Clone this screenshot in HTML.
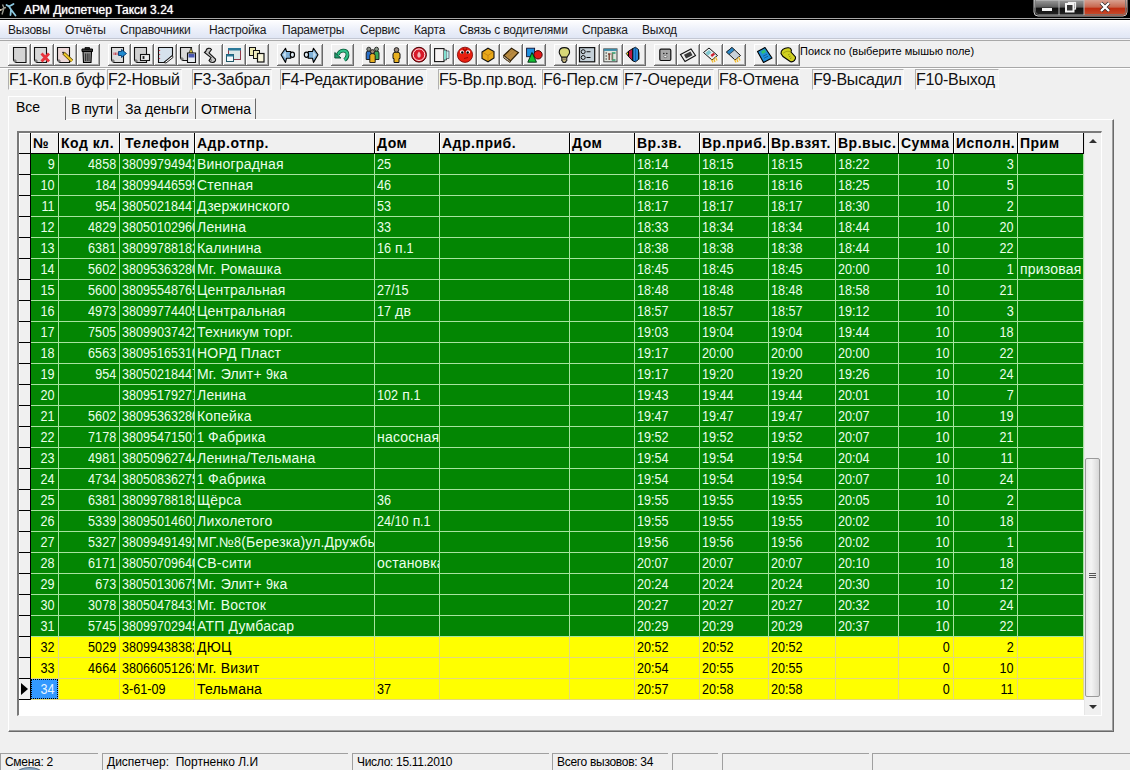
<!DOCTYPE html>
<html><head><meta charset="utf-8">
<style>
*{margin:0;padding:0;box-sizing:border-box}
html,body{width:1130px;height:770px;overflow:hidden;background:#f0f0f0;font-family:"Liberation Sans",sans-serif;position:relative}
.a{position:absolute}
.t{position:absolute;white-space:nowrap}
#title{left:0;top:0;width:1130px;height:20px;background:#000}
#menu{left:0;top:20px;width:1130px;height:21px;background:linear-gradient(#fdfdfe 0%,#eef1fa 40%,#dde4f4 100%);border-top:1px solid #fff;border-bottom:1px solid #a8a8a8;box-shadow:inset 0 -1px 0 #f4f4f8,inset 0 -2px 0 #c4c8d4}
.mi{position:absolute;top:4px;font-size:12px;letter-spacing:-.2px;color:#1a1a1a}
.tb{position:absolute;top:44px;width:23px;height:22px;background:#f0f0f0;border-right:1px solid #6a6a6a;border-bottom:1px solid #6a6a6a;box-shadow:inset 1px 1px 0 #fff,inset -1px -1px 0 #a8a8a8}
.tb svg{position:absolute;left:3px;top:3px;overflow:visible}
.fk{position:absolute;top:69px;height:21px;background:#f4f4f4;border-top:1px solid #b0b0b0;border-left:1px solid #b0b0b0;border-right:1px solid #fafafa;border-bottom:1px solid #fafafa;font-size:16px;line-height:19px;color:#111;padding-left:0;letter-spacing:-.2px;white-space:nowrap;overflow:hidden}
.tab{position:absolute;font-size:14px;letter-spacing:0;color:#000;white-space:nowrap}
.cell{position:absolute;height:20px;overflow:hidden;white-space:nowrap;font-size:14px;line-height:20px;letter-spacing:.2px}
.cell .n{display:inline-block;letter-spacing:0;transform:scaleX(.9);transform-origin:0 50%}
.cell.r{text-align:right}
.cell.r .n{transform-origin:100% 50%}
.hd{position:absolute;top:133px;height:20px;background:#f0f0f0;border-left:1px solid #fff;border-top:1px solid #fff;font-weight:bold;font-size:14px;letter-spacing:.5px;line-height:19px;padding-left:1px;white-space:nowrap;overflow:hidden;color:#000}
.sp{position:absolute;top:753px;height:17px;border-top:1px solid #a0a0a0;border-left:1px solid #a0a0a0;font-size:12px;letter-spacing:-.3px;line-height:16px;padding-left:4px;color:#000;white-space:nowrap;overflow:hidden}
</style></head><body>

<div class="a" id="title"></div><div class="a" style="left:0;top:18px;width:1130px;height:1px;background:#a8a8a8"></div>
<div class="t" style="left:24px;top:3px;font-size:12px;font-weight:normal;color:#fff;text-shadow:0 0 1px #fff;line-height:15px">АРМ Диспетчер Такси 3.24</div>
<svg class="a" style="left:0;top:0" width="20" height="18"><path d="M2.5 4.5L4 8L1 10M4 8L6 7.5M4 8L2 14.5" stroke="#9a9a90" stroke-width="1.4" fill="none"/><circle cx="0.5" cy="10" r="1" fill="#d8c8b0"/><path d="M6.5 5L9 6.5L11 9.5L10.5 15M9 6.5L13.5 4M11 9.5L15.5 15.5" stroke="#8cc8e0" stroke-width="1.8" fill="none" stroke-linecap="round"/></svg>
<svg class="a" style="left:1033px;top:0" width="95" height="18"><defs><linearGradient id="gg" x1="0" y1="0" x2="0" y2="1"><stop offset="0" stop-color="#9a9a9a"/><stop offset=".45" stop-color="#5e5e5e"/><stop offset=".5" stop-color="#0e0e0e"/><stop offset="1" stop-color="#262626"/></linearGradient><linearGradient id="rg" x1="0" y1="0" x2="0" y2="1"><stop offset="0" stop-color="#d8a090"/><stop offset=".45" stop-color="#c86850"/><stop offset=".55" stop-color="#c02c10"/><stop offset="1" stop-color="#c85030"/></linearGradient></defs><path d="M1 0V12Q1 16 5 16H90Q94 16 94 12V0Z" fill="url(#gg)" stroke="#c8c8c8" stroke-width="1"/><path d="M51 0V15.5H89.5Q93.5 15.5 93.5 11.5V0Z" fill="url(#rg)"/><path d="M2.5 0V11.5Q2.5 14.5 5.5 14.5H89.5Q92.5 14.5 92.5 11.5V0" fill="none" stroke="#777" stroke-width=".8"/><path d="M26 0V15M51 0V15" stroke="#bbb" stroke-width="1"/><rect x="9" y="8" width="10" height="3" fill="#f4f4f4"/><rect x="35.5" y="2.5" width="7" height="6.5" fill="none" stroke="#eee" stroke-width="1.2"/><rect x="33" y="4" width="7.5" height="7.5" fill="#333" stroke="#f4f4f4" stroke-width="2"/><path d="M68 3L76 11M76 3L68 11" stroke="#222" stroke-width="3.6"/><path d="M68 3L76 11M76 3L68 11" stroke="#fff" stroke-width="2.4"/></svg>
<div class="a" id="menu"></div>
<div class="mi" style="left:8px;top:23px">Вызовы</div>
<div class="mi" style="left:65px;top:23px">Отчёты</div>
<div class="mi" style="left:120px;top:23px">Справочники</div>
<div class="mi" style="left:209px;top:23px">Настройка</div>
<div class="mi" style="left:282px;top:23px">Параметры</div>
<div class="mi" style="left:360px;top:23px">Сервис</div>
<div class="mi" style="left:414px;top:23px">Карта</div>
<div class="mi" style="left:459px;top:23px">Связь с водителями</div>
<div class="mi" style="left:582px;top:23px">Справка</div>
<div class="mi" style="left:642px;top:23px">Выход</div>
<div class="tb" style="left:8px"><svg width="16" height="16" viewBox="0 0 16 16"><path d="M2.5 .5H15V15.5H5L2.5 13.0Z" fill="#d4d4d4" stroke="#111" stroke-width="1.1"/><circle cx="4" cy="14.0" r="1.1" fill="#fff" stroke="#222" stroke-width=".7"/></svg></div>
<div class="tb" style="left:31px"><svg width="16" height="16" viewBox="0 0 16 16"><path d="M0.5 .5H12.5V15.5H3L0.5 13.0Z" fill="#d8d8d8" stroke="#111" stroke-width="1.1"/><circle cx="2" cy="14.0" r="1.1" fill="#fff" stroke="#222" stroke-width=".7"/><path d="M7.5 6.5L15 14.5M15 6.5L7.5 14.5" stroke="#e8343c" stroke-width="2.8"/></svg></div>
<div class="tb" style="left:54px"><svg width="16" height="16" viewBox="0 0 16 16"><path d="M0.5 .5H12.5V15.5H3L0.5 13.0Z" fill="#ecd8d8" stroke="#111" stroke-width="1.1"/><circle cx="2" cy="14.0" r="1.1" fill="#fff" stroke="#222" stroke-width=".7"/><path d="M6.5 6L15 14" stroke="#5a4000" stroke-width="3.4"/><path d="M6.5 6L15 14" stroke="#f0c828" stroke-width="2"/><path d="M5.5 5L7 6.5" stroke="#222" stroke-width="1.6"/></svg></div>
<div class="tb" style="left:77px"><svg width="16" height="16" viewBox="0 0 16 16"><path d="M2 2H12.5V4.5H2Z" fill="#3a3a3a" stroke="#000" stroke-width="1"/><path d="M5 .5H9.5V2H5Z" fill="#333" stroke="#000" stroke-width=".8"/><path d="M3 4.5H11.5L11 15.5H3.5Z" fill="#8a8a8a" stroke="#000" stroke-width="1.1"/><path d="M5.5 6.5V14M7.25 6.5V14M9 6.5V14" stroke="#2a2a2a" stroke-width=".9"/></svg></div>
<div class="tb" style="left:108px"><svg width="16" height="16" viewBox="0 0 16 16"><path d="M0.5 .5H12.5V15.5H3L0.5 13.0Z" fill="#dcdcdc" stroke="#111" stroke-width="1.1"/><circle cx="2" cy="14.0" r="1.1" fill="#fff" stroke="#222" stroke-width=".7"/><path d="M3 5.5V8M4.5 5.5V8M6 5.5V8" stroke="#c03848" stroke-width=".9"/><path d="M7.5 4.5H10.5V2.5L15.5 6.5L10.5 10.5V8.5H7.5Z" fill="#1e8ad0" stroke="#083a70" stroke-width=".9"/></svg></div>
<div class="tb" style="left:131px"><svg width="16" height="16" viewBox="0 0 16 16"><path d="M0.5 .5H12.5V15.5H3L0.5 13.0Z" fill="#d0d0d0" stroke="#111" stroke-width="1.1"/><circle cx="2" cy="14.0" r="1.1" fill="#fff" stroke="#222" stroke-width=".7"/><rect x="6.5" y="7.5" width="9" height="6" fill="#ececec" stroke="#111" stroke-width="1.1"/><path d="M8.5 10.5H10.5M9.5 9.5V11.5M8.5 9.5H10.5M8.5 11.5H10.5" stroke="#111" stroke-width=".8"/></svg></div>
<div class="tb" style="left:154px"><svg width="16" height="16" viewBox="0 0 16 16"><path d="M1.5 .5H15.5V8.5L7 15.5H1.5Z" fill="#d6e2ec" stroke="#111" stroke-width="1.1"/><path d="M2.5 3V4M2.5 7V8M2.5 11V12" stroke="#d04050" stroke-width="1.3"/><path d="M7 15.5L15.5 8.5L16 10.5L9 16Z" fill="#fafafa" stroke="#111" stroke-width=".9"/></svg></div>
<div class="tb" style="left:177px"><svg width="16" height="16" viewBox="0 0 16 16"><path d="M0.5 .5H11.5V13.5H3L0.5 11.0Z" fill="#dadada" stroke="#111" stroke-width="1.1"/><circle cx="2" cy="12.0" r="1.1" fill="#fff" stroke="#222" stroke-width=".7"/><path d="M11 1L13 6H9Z" fill="#e0d040" stroke="#333" stroke-width=".8"/><path d="M7.5 6H15.5V15.5H7.5Z" fill="#e8ecf0" stroke="#111" stroke-width="1.1"/><rect x="8.5" y="7" width="6" height="3.5" fill="#4a58b0"/></svg></div>
<div class="tb" style="left:200px"><svg width="16" height="16" viewBox="0 0 16 16"><path d="M3 4C3 1 7 .5 8.5 2.5L6 6L12.5 12C13 13 12 15.5 9.5 15.5C8 15.5 6.5 14.5 6 13.5L8 10.5L1.5 5.5Z" fill="#cacaca" stroke="#111" stroke-width="1.1"/><path d="M6 13.5C7 12.5 8 12.5 9 13.5" stroke="#111" stroke-width=".7" fill="none"/></svg></div>
<div class="tb" style="left:223px"><svg width="16" height="16" viewBox="0 0 16 16"><rect x="2.5" y="1.5" width="12" height="11" fill="#dce8e8" stroke="#903848" stroke-width="1"/><rect x="2" y="1" width="13" height="2.5" fill="#2a7898"/><rect x=".5" y="7.5" width="7" height="7" fill="#f4f8fa" stroke="#205868" stroke-width="1"/><rect x=".5" y="7.5" width="7" height="2" fill="#2a7898"/></svg></div>
<div class="tb" style="left:246px"><svg width="16" height="16" viewBox="0 0 16 16"><rect x=".5" y=".5" width="6" height="8" fill="#ece8b0" stroke="#111"/><rect x="4.5" y="3.5" width="6" height="8" fill="#f0ecc0" stroke="#111"/><rect x="8.5" y="6.5" width="6.5" height="8.5" fill="#f8f6dc" stroke="#111" stroke-width="1.2"/></svg></div>
<div class="tb" style="left:277px"><svg width="16" height="16" viewBox="0 0 16 16"><path d="M5.5 1.2L1 7.8L5.5 15.4L6.5 11.3H10.8V4.5H6.5Z" fill="#7eb0d8" stroke="#000" stroke-width="1.1" stroke-linejoin="round"/><path d="M3 7.8L5.8 4V11.5Z" fill="#c8e0f0"/><ellipse cx="12.4" cy="7.8" rx="2.1" ry="2.6" fill="#e0ecf4" stroke="#000" stroke-width="1.2"/></svg></div>
<div class="tb" style="left:300px"><svg width="16" height="16" viewBox="0 0 16 16"><path d="M10.5 1.2L15 7.8L10.5 15.4L9.5 11.3H5.2V4.5H9.5Z" fill="#7eb0d8" stroke="#000" stroke-width="1.1" stroke-linejoin="round"/><path d="M13 7.8L10.2 4V11.5Z" fill="#c8e0f0"/><ellipse cx="3.4" cy="7.8" rx="2.1" ry="2.6" fill="#e0ecf4" stroke="#000" stroke-width="1.2"/></svg></div>
<div class="tb" style="left:331px"><svg width="16" height="16" viewBox="0 0 16 16"><path d="M4 8C4.5 3 14 1.5 13.5 8C13.3 10.5 12 12 10.5 13" stroke="#0a5838" stroke-width="3.8" fill="none"/><path d="M4 8C4.5 3 14 1.5 13.5 8C13.3 10.5 12 12 10.5 13" stroke="#30c088" stroke-width="2.2" fill="none"/><path d="M.8 5.5L7 11H.8Z" fill="#20a070" stroke="#0a4830" stroke-width=".9"/></svg></div>
<div class="tb" style="left:362px"><svg width="16" height="16" viewBox="0 0 16 16"><path d="M1.2 12.5V6Q1.2 3.8 3.8 3.8Q6.3 3.8 6.3 6V12.5Z" fill="#2a70c8" stroke="#111" stroke-width=".9"/><circle cx="3.8" cy="2.2" r="2" fill="#8a9088" stroke="#111" stroke-width=".8"/><path d="M9 12.5V6Q9 3.8 11.5 3.8Q14 3.8 14 6V12.5Z" fill="#38a858" stroke="#111" stroke-width=".9"/><circle cx="11.5" cy="2.2" r="2" fill="#8a9a8a" stroke="#111" stroke-width=".8"/><path d="M4.8 15.5V8.5Q4.8 6.5 7.5 6.5Q10.2 6.5 10.2 8.5V15.5Z" fill="#e8b020" stroke="#111" stroke-width=".9"/><circle cx="7.5" cy="4.6" r="2" fill="#a08878" stroke="#111" stroke-width=".8"/></svg></div>
<div class="tb" style="left:385px"><svg width="16" height="16" viewBox="0 0 16 16"><path d="M5 11.5V7Q5 5 8.5 5Q12 5 12 7V11.5H11V15.5H6V11.5Z" fill="#e8b020" stroke="#111" stroke-width="1"/><circle cx="8.5" cy="2.9" r="2.3" fill="#9a8a80" stroke="#111" stroke-width=".9"/></svg></div>
<div class="tb" style="left:408px"><svg width="16" height="16" viewBox="0 0 16 16"><circle cx="8" cy="7.7" r="7.4" fill="#d81828" stroke="#400" stroke-width="1"/><circle cx="8" cy="7.7" r="5.8" fill="none" stroke="#fff" stroke-width=".9"/><path d="M8 4.5C6.5 6 6 8 6.5 9.5C7 11 9 11 9.5 9.5C10 8 9.5 6 8 4.5Z" fill="#f0b8b8"/></svg></div>
<div class="tb" style="left:431px"><svg width="16" height="16" viewBox="0 0 16 16"><rect x=".6" y="1.6" width="9.4" height="13" fill="#f8f4f4" stroke="#111" stroke-width="1.1"/><path d="M10 3H12.5V13H10" fill="#80e0d0" stroke="#333" stroke-width=".8"/><path d="M12.5 4H15V11.5H12.5" fill="#c0f0f0" stroke="#445" stroke-width=".7"/></svg></div>
<div class="tb" style="left:454px"><svg width="16" height="16" viewBox="0 0 16 16"><circle cx="8" cy="7.8" r="7.6" fill="#e82010" stroke="#700" stroke-width=".8"/><ellipse cx="5" cy="5" rx="2.2" ry="1.8" fill="#fff"/><ellipse cx="11" cy="5" rx="2.2" ry="1.8" fill="#fff"/><circle cx="5.3" cy="5.5" r="1.2" fill="#000"/><circle cx="10.7" cy="5.5" r="1.2" fill="#000"/><path d="M6 1.5L8 4L10 1.5" stroke="#900" stroke-width="1.2" fill="none"/><path d="M7 11.5L11 10.5" stroke="#900" stroke-width=".9"/></svg></div>
<div class="tb" style="left:477px"><svg width="16" height="16" viewBox="0 0 16 16"><path d="M2 5L8 1.2L14 4.5V11L8 14.8L2 11.5Z" fill="#e8a818" stroke="#111" stroke-width="1.1"/><path d="M3 5.5L8 8.5L13 5M8 8.5V14" stroke="#b87810" stroke-width=".7" fill="none"/></svg></div>
<div class="tb" style="left:500px"><svg width="16" height="16" viewBox="0 0 16 16"><path d="M.8 8.5L8.5 1.2L15.5 5.5L7.5 14Z" fill="#b88a40" stroke="#2a1a00" stroke-width="1.1"/><path d="M.8 8.5V11L7 15.5L7.5 14Z" fill="#e8e0d0" stroke="#2a1a00" stroke-width=".9"/><path d="M2.5 10L4 14M4.5 11L6 15" stroke="#6a5030" stroke-width=".6"/><path d="M3 8L10 2.5M5 9.5L12.5 3.5" stroke="#987030" stroke-width=".5"/></svg></div>
<div class="tb" style="left:523px"><svg width="16" height="16" viewBox="0 0 16 16"><rect x=".6" y="1.2" width="8" height="8.5" fill="#1e90e0" stroke="#113" stroke-width=".9"/><circle cx="12" cy="7.8" r="4.2" fill="#e01818" stroke="#300" stroke-width=".9"/><path d="M6 5.5L10.5 15.2H1.8Z" fill="#10c030" stroke="#021" stroke-width=".9"/></svg></div>
<div class="tb" style="left:554px"><svg width="16" height="16" viewBox="0 0 16 16"><path d="M7.4 .6C4 .6 2.2 2.8 2.2 5.2C2.2 7.2 3.8 8.5 4.5 10.2H10C10.8 8.5 12.6 7.2 12.6 5.2C12.6 2.8 10.8 .6 7.4 .6Z" fill="#d8d878" stroke="#111" stroke-width="1.1"/><path d="M4.8 10.2H9.8V14H8.8V15.4H5.8V14H4.8Z" fill="#c8b880" stroke="#111" stroke-width="1"/><path d="M5 12.2H9.6" stroke="#554" stroke-width=".7"/></svg></div>
<div class="tb" style="left:577px"><svg width="16" height="16" viewBox="0 0 16 16"><rect x="-.5" y=".6" width="15.2" height="14.2" fill="#c4d0d8" stroke="#111" stroke-width="1.2"/><circle cx="3.2" cy="4.7" r="2" fill="none" stroke="#111" stroke-width="1"/><circle cx="3.2" cy="10.5" r="2" fill="none" stroke="#111" stroke-width="1"/><path d="M6.5 4.7H10.5M6.5 10.5H10.5" stroke="#111" stroke-width="1.1"/></svg></div>
<div class="tb" style="left:600px"><svg width="16" height="16" viewBox="0 0 16 16"><rect x=".8" y="1.9" width="13.2" height="12.9" fill="#e0e4dc" stroke="#444" stroke-width="1"/><rect x=".8" y="1.9" width="13.2" height="2" fill="#3a8aa8"/><path d="M2.5 6H4M2.5 9H4M2.5 12H4" stroke="#333" stroke-width="1.1"/><path d="M5 7H7.5M6.2 7V13" stroke="#7a4030" stroke-width="1.4"/><path d="M12.5 6H9.5V13H12.5" stroke="#2a9a6a" stroke-width="1.4" fill="none"/><path d="M9 6V13" stroke="#c06060" stroke-width=".8"/></svg></div>
<div class="tb" style="left:623px"><svg width="16" height="16" viewBox="0 0 16 16"><path d="M12.5 3L14 6V12L12.5 13" fill="#909090"/><path d="M.3 6.5L2.5 4.2V9.5Z" fill="#f0d020" stroke="#000" stroke-width=".9"/><path d="M2.5 4.2L6.8 1.5V14L2.5 9.5Z" fill="#c01840" stroke="#000" stroke-width=".9"/><path d="M6.8 1.5L9.5 .3L12.5 2.5V12.5L9.5 14.8L6.8 14Z" fill="#2888d8" stroke="#000" stroke-width=".9"/><path d="M9.5 .5V14.5" stroke="#1050a0" stroke-width=".8"/></svg></div>
<div class="tb" style="left:654px"><svg width="16" height="16" viewBox="0 0 16 16"><rect x="2.8" y="2.2" width="11" height="11.3" rx="1.2" fill="#a8a8a8" stroke="#111" stroke-width="1.2"/><circle cx="6.8" cy="6.5" r=".8" fill="#222"/><circle cx="9.8" cy="6.5" r=".8" fill="#222"/><ellipse cx="8.3" cy="9.6" rx="1.6" ry="1" fill="#fff" stroke="#333" stroke-width=".5"/></svg></div>
<div class="tb" style="left:677px"><svg width="16" height="16" viewBox="0 0 16 16"><path d="M.5 7.5L11 2L15.5 8.5L5 14.5Z" fill="#f0f0f0" stroke="#111" stroke-width="1.1"/><path d="M4 7.8L10.5 4.5L12.5 8.2L6 11.5Z" fill="#3a3a3a"/></svg></div>
<div class="tb" style="left:700px"><svg width="16" height="16" viewBox="0 0 16 16"><path d="M.5 5.5L6 1L14.5 8.5L9 13Z" fill="#e8f0f0" stroke="#111" stroke-width="1"/><path d="M2.5 6L6 3L8.5 5.5L5 8.5Z" fill="#80c8d0"/><path d="M7.5 8L10.5 5.8L12 7.5L9 10Z" fill="#d02030"/><path d="M8.5 12.5L10 15.5M10.5 11.5L12 15M12.5 10L14 13.5" stroke="#f0b828" stroke-width="1.3"/></svg></div>
<div class="tb" style="left:723px"><svg width="16" height="16" viewBox="0 0 16 16"><path d="M.5 5L6 .5L14.5 8.5L9 13Z" fill="#c8d0d8" stroke="#111" stroke-width="1"/><path d="M.5 5L6 .5L8.5 3L3 7.5Z" fill="#2a88c8" stroke="#111" stroke-width=".6"/><path d="M8.5 12.5L10 15.5M10.5 11.5L12 15M12.5 10L14 13.5" stroke="#f0b828" stroke-width="1.3"/></svg></div>
<div class="tb" style="left:754px"><svg width="16" height="16" viewBox="0 0 16 16"><path d="M.5 4.5L8 .5L15 11L6.5 15.5Z" fill="#2090d8" stroke="#000" stroke-width="1.1" stroke-linejoin="round"/><path d="M4 4.5L7.5 2.5L9 5L5.5 7Z" fill="#30c070"/><path d="M6.5 9L7.5 8.5M8.5 8L9.5 7.5M7.5 11L8.5 10.5M9.5 10L10.5 9.5" stroke="#0a3060" stroke-width="1"/></svg></div>
<div class="tb" style="left:777px"><svg width="16" height="16" viewBox="0 0 16 16"><path d="M1 6.5C.5 3.5 4 .5 8.5 .8C11 1 12 3 11 5L15.5 10C16 12.5 13.5 15.5 10.5 14.8L3 9.5Z" fill="#d0d020" stroke="#000" stroke-width="1.1"/><path d="M3 6.5C5 4.5 8 3.5 11 5" stroke="#909010" stroke-width=".8" fill="none"/><path d="M8 8L9.5 7.3M9 9.8L10.5 9.1M10 11.6L11.5 10.9" stroke="#8a8a10" stroke-width=".9"/></svg></div>
<div class="a" style="left:0;top:67px;width:1130px;height:1px;background:#a8a8a8;box-shadow:0 1px 0 #fff"></div>
<div class="t" style="left:800px;top:45px;font-size:11px;color:#000">Поиск по (выберите мышью поле)</div>
<div class="fk" style="left:8px;width:98px">F1-Коп.в буф</div>
<div class="fk" style="left:107px;width:75px">F2-Новый</div>
<div class="fk" style="left:192px;width:80px">F3-Забрал</div>
<div class="fk" style="left:280px;width:147px">F4-Редактирование</div>
<div class="fk" style="left:438px;width:104px">F5-Вр.пр.вод.</div>
<div class="fk" style="left:542px;width:79px">F6-Пер.см</div>
<div class="fk" style="left:623px;width:91px">F7-Очереди</div>
<div class="fk" style="left:718px;width:82px">F8-Отмена</div>
<div class="fk" style="left:812px;width:92px">F9-Высадил</div>
<div class="fk" style="left:915px;width:84px">F10-Выход</div>
<div class="a" style="left:8px;top:119px;width:1106px;height:613px;border-left:1px solid #fff;border-top:1px solid #fff;border-right:1px solid #6a6a6a;border-bottom:1px solid #6a6a6a;box-shadow:inset -1px -1px 0 #a0a0a0"></div>
<div class="a" style="left:8px;top:96px;width:58px;height:24px;background:#f0f0f0;border-left:1px solid #fff;border-top:1px solid #fff;border-right:1px solid #696969"></div>
<div class="tab" style="left:16px;top:99px">Все</div>
<div class="a" style="left:66px;top:98px;width:52px;height:21px;border-top:1px solid #fff;border-right:1px solid #696969"></div>
<div class="tab" style="left:66px;width:52px;text-align:center;top:101px">В пути</div>
<div class="a" style="left:118px;top:98px;width:78px;height:21px;border-top:1px solid #fff;border-right:1px solid #696969"></div>
<div class="tab" style="left:118px;width:78px;text-align:center;top:101px">За деньги</div>
<div class="a" style="left:196px;top:98px;width:60px;height:21px;border-top:1px solid #fff;border-right:1px solid #696969"></div>
<div class="tab" style="left:196px;width:60px;text-align:center;top:101px">Отмена</div>
<div class="a" style="left:17px;top:131px;width:1085px;height:585px;background:#fff;border-left:2px solid #7a7a7a;border-top:2px solid #7a7a7a;border-right:1px solid #fff;border-bottom:1px solid #fff"></div>
<div class="hd" style="left:19px;width:11px"></div>
<div class="hd" style="left:31px;width:27px">№</div>
<div class="hd" style="left:59px;width:60px">Код кл.</div>
<div class="hd" style="left:120px;width:74px;padding-left:4px">Телефон</div>
<div class="hd" style="left:195px;width:179px">Адр.отпр.</div>
<div class="hd" style="left:375px;width:64px">Дом</div>
<div class="hd" style="left:440px;width:129px">Адр.приб.</div>
<div class="hd" style="left:570px;width:64px">Дом</div>
<div class="hd" style="left:635px;width:64px">Вр.зв.</div>
<div class="hd" style="left:700px;width:68px">Вр.приб.</div>
<div class="hd" style="left:769px;width:66px">Вр.взят.</div>
<div class="hd" style="left:836px;width:62px">Вр.выс.</div>
<div class="hd" style="left:899px;width:54px">Сумма</div>
<div class="hd" style="left:954px;width:63px">Исполн.</div>
<div class="hd" style="left:1018px;width:65px">Прим</div>
<div class="a" style="left:19px;top:153px;width:1065px;height:1px;background:#000"></div>
<div class="a" style="left:30px;top:133px;width:1px;height:21px;background:#000"></div>
<div class="a" style="left:58px;top:133px;width:1px;height:21px;background:#000"></div>
<div class="a" style="left:119px;top:133px;width:1px;height:21px;background:#000"></div>
<div class="a" style="left:194px;top:133px;width:1px;height:21px;background:#000"></div>
<div class="a" style="left:374px;top:133px;width:1px;height:21px;background:#000"></div>
<div class="a" style="left:439px;top:133px;width:1px;height:21px;background:#000"></div>
<div class="a" style="left:569px;top:133px;width:1px;height:21px;background:#000"></div>
<div class="a" style="left:634px;top:133px;width:1px;height:21px;background:#000"></div>
<div class="a" style="left:699px;top:133px;width:1px;height:21px;background:#000"></div>
<div class="a" style="left:768px;top:133px;width:1px;height:21px;background:#000"></div>
<div class="a" style="left:835px;top:133px;width:1px;height:21px;background:#000"></div>
<div class="a" style="left:898px;top:133px;width:1px;height:21px;background:#000"></div>
<div class="a" style="left:953px;top:133px;width:1px;height:21px;background:#000"></div>
<div class="a" style="left:1017px;top:133px;width:1px;height:21px;background:#000"></div>
<div class="a" style="left:1083px;top:133px;width:1px;height:21px;background:#000"></div>
<div class="a" style="left:19px;top:154px;width:11px;height:20px;background:#f0f0f0;border-left:1px solid #fff"></div>
<div class="a" style="left:19px;top:174px;width:12px;height:1px;background:#000"></div>
<div class="a" style="left:31px;top:154px;width:1052px;height:21px;background:#038603"></div>
<div class="a" style="left:31px;top:174px;width:1052px;height:1px;background:#a8e4a0"></div>
<div class="a" style="left:58px;top:154px;width:1px;height:21px;background:#a8e4a0"></div>
<div class="a" style="left:119px;top:154px;width:1px;height:21px;background:#a8e4a0"></div>
<div class="a" style="left:194px;top:154px;width:1px;height:21px;background:#a8e4a0"></div>
<div class="a" style="left:374px;top:154px;width:1px;height:21px;background:#a8e4a0"></div>
<div class="a" style="left:439px;top:154px;width:1px;height:21px;background:#a8e4a0"></div>
<div class="a" style="left:569px;top:154px;width:1px;height:21px;background:#a8e4a0"></div>
<div class="a" style="left:634px;top:154px;width:1px;height:21px;background:#a8e4a0"></div>
<div class="a" style="left:699px;top:154px;width:1px;height:21px;background:#a8e4a0"></div>
<div class="a" style="left:768px;top:154px;width:1px;height:21px;background:#a8e4a0"></div>
<div class="a" style="left:835px;top:154px;width:1px;height:21px;background:#a8e4a0"></div>
<div class="a" style="left:898px;top:154px;width:1px;height:21px;background:#a8e4a0"></div>
<div class="a" style="left:953px;top:154px;width:1px;height:21px;background:#a8e4a0"></div>
<div class="a" style="left:1017px;top:154px;width:1px;height:21px;background:#a8e4a0"></div>
<div class="a" style="left:30px;top:154px;width:1px;height:21px;background:#000"></div>
<div class="a" style="left:1083px;top:154px;width:1px;height:21px;background:#a8e4a0"></div>
<div class="cell r" style="left:31px;top:154px;width:27px;color:#eaffea;padding-right:3px"><span class="n">9</span></div>
<div class="cell r" style="left:59px;top:154px;width:60px;color:#eaffea;padding-right:3px"><span class="n">4858</span></div>
<div class="cell" style="left:120px;top:154px;width:74px;color:#eaffea;padding-left:2px"><span class="n" style="margin-right:-9.3px">380997949422</span></div>
<div class="cell" style="left:195px;top:154px;width:179px;color:#eaffea;padding-left:2px">Виноградная</div>
<div class="cell" style="left:375px;top:154px;width:64px;color:#eaffea;padding-left:2px"><span class="n" style="margin-right:-1.6px">25</span></div>
<div class="cell" style="left:635px;top:154px;width:64px;color:#eaffea;padding-left:2px"><span class="n" style="margin-right:-3.5px">18:14</span></div>
<div class="cell" style="left:700px;top:154px;width:68px;color:#eaffea;padding-left:2px"><span class="n" style="margin-right:-3.5px">18:15</span></div>
<div class="cell" style="left:769px;top:154px;width:66px;color:#eaffea;padding-left:2px"><span class="n" style="margin-right:-3.5px">18:15</span></div>
<div class="cell" style="left:836px;top:154px;width:62px;color:#eaffea;padding-left:2px"><span class="n" style="margin-right:-3.5px">18:22</span></div>
<div class="cell r" style="left:899px;top:154px;width:54px;color:#eaffea;padding-right:3px"><span class="n">10</span></div>
<div class="cell r" style="left:954px;top:154px;width:63px;color:#eaffea;padding-right:3px"><span class="n">3</span></div>
<div class="a" style="left:19px;top:175px;width:11px;height:20px;background:#f0f0f0;border-left:1px solid #fff"></div>
<div class="a" style="left:19px;top:195px;width:12px;height:1px;background:#000"></div>
<div class="a" style="left:31px;top:175px;width:1052px;height:21px;background:#038603"></div>
<div class="a" style="left:31px;top:195px;width:1052px;height:1px;background:#a8e4a0"></div>
<div class="a" style="left:58px;top:175px;width:1px;height:21px;background:#a8e4a0"></div>
<div class="a" style="left:119px;top:175px;width:1px;height:21px;background:#a8e4a0"></div>
<div class="a" style="left:194px;top:175px;width:1px;height:21px;background:#a8e4a0"></div>
<div class="a" style="left:374px;top:175px;width:1px;height:21px;background:#a8e4a0"></div>
<div class="a" style="left:439px;top:175px;width:1px;height:21px;background:#a8e4a0"></div>
<div class="a" style="left:569px;top:175px;width:1px;height:21px;background:#a8e4a0"></div>
<div class="a" style="left:634px;top:175px;width:1px;height:21px;background:#a8e4a0"></div>
<div class="a" style="left:699px;top:175px;width:1px;height:21px;background:#a8e4a0"></div>
<div class="a" style="left:768px;top:175px;width:1px;height:21px;background:#a8e4a0"></div>
<div class="a" style="left:835px;top:175px;width:1px;height:21px;background:#a8e4a0"></div>
<div class="a" style="left:898px;top:175px;width:1px;height:21px;background:#a8e4a0"></div>
<div class="a" style="left:953px;top:175px;width:1px;height:21px;background:#a8e4a0"></div>
<div class="a" style="left:1017px;top:175px;width:1px;height:21px;background:#a8e4a0"></div>
<div class="a" style="left:30px;top:175px;width:1px;height:21px;background:#000"></div>
<div class="a" style="left:1083px;top:175px;width:1px;height:21px;background:#a8e4a0"></div>
<div class="cell r" style="left:31px;top:175px;width:27px;color:#eaffea;padding-right:3px"><span class="n">10</span></div>
<div class="cell r" style="left:59px;top:175px;width:60px;color:#eaffea;padding-right:3px"><span class="n">184</span></div>
<div class="cell" style="left:120px;top:175px;width:74px;color:#eaffea;padding-left:2px"><span class="n" style="margin-right:-9.3px">380994465955</span></div>
<div class="cell" style="left:195px;top:175px;width:179px;color:#eaffea;padding-left:2px">Степная</div>
<div class="cell" style="left:375px;top:175px;width:64px;color:#eaffea;padding-left:2px"><span class="n" style="margin-right:-1.6px">46</span></div>
<div class="cell" style="left:635px;top:175px;width:64px;color:#eaffea;padding-left:2px"><span class="n" style="margin-right:-3.5px">18:16</span></div>
<div class="cell" style="left:700px;top:175px;width:68px;color:#eaffea;padding-left:2px"><span class="n" style="margin-right:-3.5px">18:16</span></div>
<div class="cell" style="left:769px;top:175px;width:66px;color:#eaffea;padding-left:2px"><span class="n" style="margin-right:-3.5px">18:16</span></div>
<div class="cell" style="left:836px;top:175px;width:62px;color:#eaffea;padding-left:2px"><span class="n" style="margin-right:-3.5px">18:25</span></div>
<div class="cell r" style="left:899px;top:175px;width:54px;color:#eaffea;padding-right:3px"><span class="n">10</span></div>
<div class="cell r" style="left:954px;top:175px;width:63px;color:#eaffea;padding-right:3px"><span class="n">5</span></div>
<div class="a" style="left:19px;top:196px;width:11px;height:20px;background:#f0f0f0;border-left:1px solid #fff"></div>
<div class="a" style="left:19px;top:216px;width:12px;height:1px;background:#000"></div>
<div class="a" style="left:31px;top:196px;width:1052px;height:21px;background:#038603"></div>
<div class="a" style="left:31px;top:216px;width:1052px;height:1px;background:#a8e4a0"></div>
<div class="a" style="left:58px;top:196px;width:1px;height:21px;background:#a8e4a0"></div>
<div class="a" style="left:119px;top:196px;width:1px;height:21px;background:#a8e4a0"></div>
<div class="a" style="left:194px;top:196px;width:1px;height:21px;background:#a8e4a0"></div>
<div class="a" style="left:374px;top:196px;width:1px;height:21px;background:#a8e4a0"></div>
<div class="a" style="left:439px;top:196px;width:1px;height:21px;background:#a8e4a0"></div>
<div class="a" style="left:569px;top:196px;width:1px;height:21px;background:#a8e4a0"></div>
<div class="a" style="left:634px;top:196px;width:1px;height:21px;background:#a8e4a0"></div>
<div class="a" style="left:699px;top:196px;width:1px;height:21px;background:#a8e4a0"></div>
<div class="a" style="left:768px;top:196px;width:1px;height:21px;background:#a8e4a0"></div>
<div class="a" style="left:835px;top:196px;width:1px;height:21px;background:#a8e4a0"></div>
<div class="a" style="left:898px;top:196px;width:1px;height:21px;background:#a8e4a0"></div>
<div class="a" style="left:953px;top:196px;width:1px;height:21px;background:#a8e4a0"></div>
<div class="a" style="left:1017px;top:196px;width:1px;height:21px;background:#a8e4a0"></div>
<div class="a" style="left:30px;top:196px;width:1px;height:21px;background:#000"></div>
<div class="a" style="left:1083px;top:196px;width:1px;height:21px;background:#a8e4a0"></div>
<div class="cell r" style="left:31px;top:196px;width:27px;color:#eaffea;padding-right:3px"><span class="n">11</span></div>
<div class="cell r" style="left:59px;top:196px;width:60px;color:#eaffea;padding-right:3px"><span class="n">954</span></div>
<div class="cell" style="left:120px;top:196px;width:74px;color:#eaffea;padding-left:2px"><span class="n" style="margin-right:-9.3px">380502184477</span></div>
<div class="cell" style="left:195px;top:196px;width:179px;color:#eaffea;padding-left:2px">Дзержинского</div>
<div class="cell" style="left:375px;top:196px;width:64px;color:#eaffea;padding-left:2px"><span class="n" style="margin-right:-1.6px">53</span></div>
<div class="cell" style="left:635px;top:196px;width:64px;color:#eaffea;padding-left:2px"><span class="n" style="margin-right:-3.5px">18:17</span></div>
<div class="cell" style="left:700px;top:196px;width:68px;color:#eaffea;padding-left:2px"><span class="n" style="margin-right:-3.5px">18:17</span></div>
<div class="cell" style="left:769px;top:196px;width:66px;color:#eaffea;padding-left:2px"><span class="n" style="margin-right:-3.5px">18:17</span></div>
<div class="cell" style="left:836px;top:196px;width:62px;color:#eaffea;padding-left:2px"><span class="n" style="margin-right:-3.5px">18:30</span></div>
<div class="cell r" style="left:899px;top:196px;width:54px;color:#eaffea;padding-right:3px"><span class="n">10</span></div>
<div class="cell r" style="left:954px;top:196px;width:63px;color:#eaffea;padding-right:3px"><span class="n">2</span></div>
<div class="a" style="left:19px;top:217px;width:11px;height:20px;background:#f0f0f0;border-left:1px solid #fff"></div>
<div class="a" style="left:19px;top:237px;width:12px;height:1px;background:#000"></div>
<div class="a" style="left:31px;top:217px;width:1052px;height:21px;background:#038603"></div>
<div class="a" style="left:31px;top:237px;width:1052px;height:1px;background:#a8e4a0"></div>
<div class="a" style="left:58px;top:217px;width:1px;height:21px;background:#a8e4a0"></div>
<div class="a" style="left:119px;top:217px;width:1px;height:21px;background:#a8e4a0"></div>
<div class="a" style="left:194px;top:217px;width:1px;height:21px;background:#a8e4a0"></div>
<div class="a" style="left:374px;top:217px;width:1px;height:21px;background:#a8e4a0"></div>
<div class="a" style="left:439px;top:217px;width:1px;height:21px;background:#a8e4a0"></div>
<div class="a" style="left:569px;top:217px;width:1px;height:21px;background:#a8e4a0"></div>
<div class="a" style="left:634px;top:217px;width:1px;height:21px;background:#a8e4a0"></div>
<div class="a" style="left:699px;top:217px;width:1px;height:21px;background:#a8e4a0"></div>
<div class="a" style="left:768px;top:217px;width:1px;height:21px;background:#a8e4a0"></div>
<div class="a" style="left:835px;top:217px;width:1px;height:21px;background:#a8e4a0"></div>
<div class="a" style="left:898px;top:217px;width:1px;height:21px;background:#a8e4a0"></div>
<div class="a" style="left:953px;top:217px;width:1px;height:21px;background:#a8e4a0"></div>
<div class="a" style="left:1017px;top:217px;width:1px;height:21px;background:#a8e4a0"></div>
<div class="a" style="left:30px;top:217px;width:1px;height:21px;background:#000"></div>
<div class="a" style="left:1083px;top:217px;width:1px;height:21px;background:#a8e4a0"></div>
<div class="cell r" style="left:31px;top:217px;width:27px;color:#eaffea;padding-right:3px"><span class="n">12</span></div>
<div class="cell r" style="left:59px;top:217px;width:60px;color:#eaffea;padding-right:3px"><span class="n">4829</span></div>
<div class="cell" style="left:120px;top:217px;width:74px;color:#eaffea;padding-left:2px"><span class="n" style="margin-right:-9.3px">380501029600</span></div>
<div class="cell" style="left:195px;top:217px;width:179px;color:#eaffea;padding-left:2px">Ленина</div>
<div class="cell" style="left:375px;top:217px;width:64px;color:#eaffea;padding-left:2px"><span class="n" style="margin-right:-1.6px">33</span></div>
<div class="cell" style="left:635px;top:217px;width:64px;color:#eaffea;padding-left:2px"><span class="n" style="margin-right:-3.5px">18:33</span></div>
<div class="cell" style="left:700px;top:217px;width:68px;color:#eaffea;padding-left:2px"><span class="n" style="margin-right:-3.5px">18:34</span></div>
<div class="cell" style="left:769px;top:217px;width:66px;color:#eaffea;padding-left:2px"><span class="n" style="margin-right:-3.5px">18:34</span></div>
<div class="cell" style="left:836px;top:217px;width:62px;color:#eaffea;padding-left:2px"><span class="n" style="margin-right:-3.5px">18:44</span></div>
<div class="cell r" style="left:899px;top:217px;width:54px;color:#eaffea;padding-right:3px"><span class="n">10</span></div>
<div class="cell r" style="left:954px;top:217px;width:63px;color:#eaffea;padding-right:3px"><span class="n">20</span></div>
<div class="a" style="left:19px;top:238px;width:11px;height:20px;background:#f0f0f0;border-left:1px solid #fff"></div>
<div class="a" style="left:19px;top:258px;width:12px;height:1px;background:#000"></div>
<div class="a" style="left:31px;top:238px;width:1052px;height:21px;background:#038603"></div>
<div class="a" style="left:31px;top:258px;width:1052px;height:1px;background:#a8e4a0"></div>
<div class="a" style="left:58px;top:238px;width:1px;height:21px;background:#a8e4a0"></div>
<div class="a" style="left:119px;top:238px;width:1px;height:21px;background:#a8e4a0"></div>
<div class="a" style="left:194px;top:238px;width:1px;height:21px;background:#a8e4a0"></div>
<div class="a" style="left:374px;top:238px;width:1px;height:21px;background:#a8e4a0"></div>
<div class="a" style="left:439px;top:238px;width:1px;height:21px;background:#a8e4a0"></div>
<div class="a" style="left:569px;top:238px;width:1px;height:21px;background:#a8e4a0"></div>
<div class="a" style="left:634px;top:238px;width:1px;height:21px;background:#a8e4a0"></div>
<div class="a" style="left:699px;top:238px;width:1px;height:21px;background:#a8e4a0"></div>
<div class="a" style="left:768px;top:238px;width:1px;height:21px;background:#a8e4a0"></div>
<div class="a" style="left:835px;top:238px;width:1px;height:21px;background:#a8e4a0"></div>
<div class="a" style="left:898px;top:238px;width:1px;height:21px;background:#a8e4a0"></div>
<div class="a" style="left:953px;top:238px;width:1px;height:21px;background:#a8e4a0"></div>
<div class="a" style="left:1017px;top:238px;width:1px;height:21px;background:#a8e4a0"></div>
<div class="a" style="left:30px;top:238px;width:1px;height:21px;background:#000"></div>
<div class="a" style="left:1083px;top:238px;width:1px;height:21px;background:#a8e4a0"></div>
<div class="cell r" style="left:31px;top:238px;width:27px;color:#eaffea;padding-right:3px"><span class="n">13</span></div>
<div class="cell r" style="left:59px;top:238px;width:60px;color:#eaffea;padding-right:3px"><span class="n">6381</span></div>
<div class="cell" style="left:120px;top:238px;width:74px;color:#eaffea;padding-left:2px"><span class="n" style="margin-right:-9.3px">380997881822</span></div>
<div class="cell" style="left:195px;top:238px;width:179px;color:#eaffea;padding-left:2px">Калинина</div>
<div class="cell" style="left:375px;top:238px;width:64px;color:#eaffea;padding-left:2px"><span class="n" style="margin-right:-1.6px">16</span> п<span class="n" style="margin-right:-1.2px">.1</span></div>
<div class="cell" style="left:635px;top:238px;width:64px;color:#eaffea;padding-left:2px"><span class="n" style="margin-right:-3.5px">18:38</span></div>
<div class="cell" style="left:700px;top:238px;width:68px;color:#eaffea;padding-left:2px"><span class="n" style="margin-right:-3.5px">18:38</span></div>
<div class="cell" style="left:769px;top:238px;width:66px;color:#eaffea;padding-left:2px"><span class="n" style="margin-right:-3.5px">18:38</span></div>
<div class="cell" style="left:836px;top:238px;width:62px;color:#eaffea;padding-left:2px"><span class="n" style="margin-right:-3.5px">18:44</span></div>
<div class="cell r" style="left:899px;top:238px;width:54px;color:#eaffea;padding-right:3px"><span class="n">10</span></div>
<div class="cell r" style="left:954px;top:238px;width:63px;color:#eaffea;padding-right:3px"><span class="n">22</span></div>
<div class="a" style="left:19px;top:259px;width:11px;height:20px;background:#f0f0f0;border-left:1px solid #fff"></div>
<div class="a" style="left:19px;top:279px;width:12px;height:1px;background:#000"></div>
<div class="a" style="left:31px;top:259px;width:1052px;height:21px;background:#038603"></div>
<div class="a" style="left:31px;top:279px;width:1052px;height:1px;background:#a8e4a0"></div>
<div class="a" style="left:58px;top:259px;width:1px;height:21px;background:#a8e4a0"></div>
<div class="a" style="left:119px;top:259px;width:1px;height:21px;background:#a8e4a0"></div>
<div class="a" style="left:194px;top:259px;width:1px;height:21px;background:#a8e4a0"></div>
<div class="a" style="left:374px;top:259px;width:1px;height:21px;background:#a8e4a0"></div>
<div class="a" style="left:439px;top:259px;width:1px;height:21px;background:#a8e4a0"></div>
<div class="a" style="left:569px;top:259px;width:1px;height:21px;background:#a8e4a0"></div>
<div class="a" style="left:634px;top:259px;width:1px;height:21px;background:#a8e4a0"></div>
<div class="a" style="left:699px;top:259px;width:1px;height:21px;background:#a8e4a0"></div>
<div class="a" style="left:768px;top:259px;width:1px;height:21px;background:#a8e4a0"></div>
<div class="a" style="left:835px;top:259px;width:1px;height:21px;background:#a8e4a0"></div>
<div class="a" style="left:898px;top:259px;width:1px;height:21px;background:#a8e4a0"></div>
<div class="a" style="left:953px;top:259px;width:1px;height:21px;background:#a8e4a0"></div>
<div class="a" style="left:1017px;top:259px;width:1px;height:21px;background:#a8e4a0"></div>
<div class="a" style="left:30px;top:259px;width:1px;height:21px;background:#000"></div>
<div class="a" style="left:1083px;top:259px;width:1px;height:21px;background:#a8e4a0"></div>
<div class="cell r" style="left:31px;top:259px;width:27px;color:#eaffea;padding-right:3px"><span class="n">14</span></div>
<div class="cell r" style="left:59px;top:259px;width:60px;color:#eaffea;padding-right:3px"><span class="n">5602</span></div>
<div class="cell" style="left:120px;top:259px;width:74px;color:#eaffea;padding-left:2px"><span class="n" style="margin-right:-9.3px">380953632800</span></div>
<div class="cell" style="left:195px;top:259px;width:179px;color:#eaffea;padding-left:2px">Мг. Ромашка</div>
<div class="cell" style="left:635px;top:259px;width:64px;color:#eaffea;padding-left:2px"><span class="n" style="margin-right:-3.5px">18:45</span></div>
<div class="cell" style="left:700px;top:259px;width:68px;color:#eaffea;padding-left:2px"><span class="n" style="margin-right:-3.5px">18:45</span></div>
<div class="cell" style="left:769px;top:259px;width:66px;color:#eaffea;padding-left:2px"><span class="n" style="margin-right:-3.5px">18:45</span></div>
<div class="cell" style="left:836px;top:259px;width:62px;color:#eaffea;padding-left:2px"><span class="n" style="margin-right:-3.5px">20:00</span></div>
<div class="cell r" style="left:899px;top:259px;width:54px;color:#eaffea;padding-right:3px"><span class="n">10</span></div>
<div class="cell r" style="left:954px;top:259px;width:63px;color:#eaffea;padding-right:3px"><span class="n">1</span></div>
<div class="cell" style="left:1018px;top:259px;width:65px;color:#eaffea;padding-left:2px">призовая</div>
<div class="a" style="left:19px;top:280px;width:11px;height:20px;background:#f0f0f0;border-left:1px solid #fff"></div>
<div class="a" style="left:19px;top:300px;width:12px;height:1px;background:#000"></div>
<div class="a" style="left:31px;top:280px;width:1052px;height:21px;background:#038603"></div>
<div class="a" style="left:31px;top:300px;width:1052px;height:1px;background:#a8e4a0"></div>
<div class="a" style="left:58px;top:280px;width:1px;height:21px;background:#a8e4a0"></div>
<div class="a" style="left:119px;top:280px;width:1px;height:21px;background:#a8e4a0"></div>
<div class="a" style="left:194px;top:280px;width:1px;height:21px;background:#a8e4a0"></div>
<div class="a" style="left:374px;top:280px;width:1px;height:21px;background:#a8e4a0"></div>
<div class="a" style="left:439px;top:280px;width:1px;height:21px;background:#a8e4a0"></div>
<div class="a" style="left:569px;top:280px;width:1px;height:21px;background:#a8e4a0"></div>
<div class="a" style="left:634px;top:280px;width:1px;height:21px;background:#a8e4a0"></div>
<div class="a" style="left:699px;top:280px;width:1px;height:21px;background:#a8e4a0"></div>
<div class="a" style="left:768px;top:280px;width:1px;height:21px;background:#a8e4a0"></div>
<div class="a" style="left:835px;top:280px;width:1px;height:21px;background:#a8e4a0"></div>
<div class="a" style="left:898px;top:280px;width:1px;height:21px;background:#a8e4a0"></div>
<div class="a" style="left:953px;top:280px;width:1px;height:21px;background:#a8e4a0"></div>
<div class="a" style="left:1017px;top:280px;width:1px;height:21px;background:#a8e4a0"></div>
<div class="a" style="left:30px;top:280px;width:1px;height:21px;background:#000"></div>
<div class="a" style="left:1083px;top:280px;width:1px;height:21px;background:#a8e4a0"></div>
<div class="cell r" style="left:31px;top:280px;width:27px;color:#eaffea;padding-right:3px"><span class="n">15</span></div>
<div class="cell r" style="left:59px;top:280px;width:60px;color:#eaffea;padding-right:3px"><span class="n">5600</span></div>
<div class="cell" style="left:120px;top:280px;width:74px;color:#eaffea;padding-left:2px"><span class="n" style="margin-right:-9.3px">380955487655</span></div>
<div class="cell" style="left:195px;top:280px;width:179px;color:#eaffea;padding-left:2px">Центральная</div>
<div class="cell" style="left:375px;top:280px;width:64px;color:#eaffea;padding-left:2px"><span class="n" style="margin-right:-3.5px">27/15</span></div>
<div class="cell" style="left:635px;top:280px;width:64px;color:#eaffea;padding-left:2px"><span class="n" style="margin-right:-3.5px">18:48</span></div>
<div class="cell" style="left:700px;top:280px;width:68px;color:#eaffea;padding-left:2px"><span class="n" style="margin-right:-3.5px">18:48</span></div>
<div class="cell" style="left:769px;top:280px;width:66px;color:#eaffea;padding-left:2px"><span class="n" style="margin-right:-3.5px">18:48</span></div>
<div class="cell" style="left:836px;top:280px;width:62px;color:#eaffea;padding-left:2px"><span class="n" style="margin-right:-3.5px">18:58</span></div>
<div class="cell r" style="left:899px;top:280px;width:54px;color:#eaffea;padding-right:3px"><span class="n">10</span></div>
<div class="cell r" style="left:954px;top:280px;width:63px;color:#eaffea;padding-right:3px"><span class="n">21</span></div>
<div class="a" style="left:19px;top:301px;width:11px;height:20px;background:#f0f0f0;border-left:1px solid #fff"></div>
<div class="a" style="left:19px;top:321px;width:12px;height:1px;background:#000"></div>
<div class="a" style="left:31px;top:301px;width:1052px;height:21px;background:#038603"></div>
<div class="a" style="left:31px;top:321px;width:1052px;height:1px;background:#a8e4a0"></div>
<div class="a" style="left:58px;top:301px;width:1px;height:21px;background:#a8e4a0"></div>
<div class="a" style="left:119px;top:301px;width:1px;height:21px;background:#a8e4a0"></div>
<div class="a" style="left:194px;top:301px;width:1px;height:21px;background:#a8e4a0"></div>
<div class="a" style="left:374px;top:301px;width:1px;height:21px;background:#a8e4a0"></div>
<div class="a" style="left:439px;top:301px;width:1px;height:21px;background:#a8e4a0"></div>
<div class="a" style="left:569px;top:301px;width:1px;height:21px;background:#a8e4a0"></div>
<div class="a" style="left:634px;top:301px;width:1px;height:21px;background:#a8e4a0"></div>
<div class="a" style="left:699px;top:301px;width:1px;height:21px;background:#a8e4a0"></div>
<div class="a" style="left:768px;top:301px;width:1px;height:21px;background:#a8e4a0"></div>
<div class="a" style="left:835px;top:301px;width:1px;height:21px;background:#a8e4a0"></div>
<div class="a" style="left:898px;top:301px;width:1px;height:21px;background:#a8e4a0"></div>
<div class="a" style="left:953px;top:301px;width:1px;height:21px;background:#a8e4a0"></div>
<div class="a" style="left:1017px;top:301px;width:1px;height:21px;background:#a8e4a0"></div>
<div class="a" style="left:30px;top:301px;width:1px;height:21px;background:#000"></div>
<div class="a" style="left:1083px;top:301px;width:1px;height:21px;background:#a8e4a0"></div>
<div class="cell r" style="left:31px;top:301px;width:27px;color:#eaffea;padding-right:3px"><span class="n">16</span></div>
<div class="cell r" style="left:59px;top:301px;width:60px;color:#eaffea;padding-right:3px"><span class="n">4973</span></div>
<div class="cell" style="left:120px;top:301px;width:74px;color:#eaffea;padding-left:2px"><span class="n" style="margin-right:-9.3px">380997744055</span></div>
<div class="cell" style="left:195px;top:301px;width:179px;color:#eaffea;padding-left:2px">Центральная</div>
<div class="cell" style="left:375px;top:301px;width:64px;color:#eaffea;padding-left:2px"><span class="n" style="margin-right:-1.6px">17</span> дв</div>
<div class="cell" style="left:635px;top:301px;width:64px;color:#eaffea;padding-left:2px"><span class="n" style="margin-right:-3.5px">18:57</span></div>
<div class="cell" style="left:700px;top:301px;width:68px;color:#eaffea;padding-left:2px"><span class="n" style="margin-right:-3.5px">18:57</span></div>
<div class="cell" style="left:769px;top:301px;width:66px;color:#eaffea;padding-left:2px"><span class="n" style="margin-right:-3.5px">18:57</span></div>
<div class="cell" style="left:836px;top:301px;width:62px;color:#eaffea;padding-left:2px"><span class="n" style="margin-right:-3.5px">19:12</span></div>
<div class="cell r" style="left:899px;top:301px;width:54px;color:#eaffea;padding-right:3px"><span class="n">10</span></div>
<div class="cell r" style="left:954px;top:301px;width:63px;color:#eaffea;padding-right:3px"><span class="n">3</span></div>
<div class="a" style="left:19px;top:322px;width:11px;height:20px;background:#f0f0f0;border-left:1px solid #fff"></div>
<div class="a" style="left:19px;top:342px;width:12px;height:1px;background:#000"></div>
<div class="a" style="left:31px;top:322px;width:1052px;height:21px;background:#038603"></div>
<div class="a" style="left:31px;top:342px;width:1052px;height:1px;background:#a8e4a0"></div>
<div class="a" style="left:58px;top:322px;width:1px;height:21px;background:#a8e4a0"></div>
<div class="a" style="left:119px;top:322px;width:1px;height:21px;background:#a8e4a0"></div>
<div class="a" style="left:194px;top:322px;width:1px;height:21px;background:#a8e4a0"></div>
<div class="a" style="left:374px;top:322px;width:1px;height:21px;background:#a8e4a0"></div>
<div class="a" style="left:439px;top:322px;width:1px;height:21px;background:#a8e4a0"></div>
<div class="a" style="left:569px;top:322px;width:1px;height:21px;background:#a8e4a0"></div>
<div class="a" style="left:634px;top:322px;width:1px;height:21px;background:#a8e4a0"></div>
<div class="a" style="left:699px;top:322px;width:1px;height:21px;background:#a8e4a0"></div>
<div class="a" style="left:768px;top:322px;width:1px;height:21px;background:#a8e4a0"></div>
<div class="a" style="left:835px;top:322px;width:1px;height:21px;background:#a8e4a0"></div>
<div class="a" style="left:898px;top:322px;width:1px;height:21px;background:#a8e4a0"></div>
<div class="a" style="left:953px;top:322px;width:1px;height:21px;background:#a8e4a0"></div>
<div class="a" style="left:1017px;top:322px;width:1px;height:21px;background:#a8e4a0"></div>
<div class="a" style="left:30px;top:322px;width:1px;height:21px;background:#000"></div>
<div class="a" style="left:1083px;top:322px;width:1px;height:21px;background:#a8e4a0"></div>
<div class="cell r" style="left:31px;top:322px;width:27px;color:#eaffea;padding-right:3px"><span class="n">17</span></div>
<div class="cell r" style="left:59px;top:322px;width:60px;color:#eaffea;padding-right:3px"><span class="n">7505</span></div>
<div class="cell" style="left:120px;top:322px;width:74px;color:#eaffea;padding-left:2px"><span class="n" style="margin-right:-9.3px">380990374222</span></div>
<div class="cell" style="left:195px;top:322px;width:179px;color:#eaffea;padding-left:2px">Техникум торг.</div>
<div class="cell" style="left:635px;top:322px;width:64px;color:#eaffea;padding-left:2px"><span class="n" style="margin-right:-3.5px">19:03</span></div>
<div class="cell" style="left:700px;top:322px;width:68px;color:#eaffea;padding-left:2px"><span class="n" style="margin-right:-3.5px">19:04</span></div>
<div class="cell" style="left:769px;top:322px;width:66px;color:#eaffea;padding-left:2px"><span class="n" style="margin-right:-3.5px">19:04</span></div>
<div class="cell" style="left:836px;top:322px;width:62px;color:#eaffea;padding-left:2px"><span class="n" style="margin-right:-3.5px">19:44</span></div>
<div class="cell r" style="left:899px;top:322px;width:54px;color:#eaffea;padding-right:3px"><span class="n">10</span></div>
<div class="cell r" style="left:954px;top:322px;width:63px;color:#eaffea;padding-right:3px"><span class="n">18</span></div>
<div class="a" style="left:19px;top:343px;width:11px;height:20px;background:#f0f0f0;border-left:1px solid #fff"></div>
<div class="a" style="left:19px;top:363px;width:12px;height:1px;background:#000"></div>
<div class="a" style="left:31px;top:343px;width:1052px;height:21px;background:#038603"></div>
<div class="a" style="left:31px;top:363px;width:1052px;height:1px;background:#a8e4a0"></div>
<div class="a" style="left:58px;top:343px;width:1px;height:21px;background:#a8e4a0"></div>
<div class="a" style="left:119px;top:343px;width:1px;height:21px;background:#a8e4a0"></div>
<div class="a" style="left:194px;top:343px;width:1px;height:21px;background:#a8e4a0"></div>
<div class="a" style="left:374px;top:343px;width:1px;height:21px;background:#a8e4a0"></div>
<div class="a" style="left:439px;top:343px;width:1px;height:21px;background:#a8e4a0"></div>
<div class="a" style="left:569px;top:343px;width:1px;height:21px;background:#a8e4a0"></div>
<div class="a" style="left:634px;top:343px;width:1px;height:21px;background:#a8e4a0"></div>
<div class="a" style="left:699px;top:343px;width:1px;height:21px;background:#a8e4a0"></div>
<div class="a" style="left:768px;top:343px;width:1px;height:21px;background:#a8e4a0"></div>
<div class="a" style="left:835px;top:343px;width:1px;height:21px;background:#a8e4a0"></div>
<div class="a" style="left:898px;top:343px;width:1px;height:21px;background:#a8e4a0"></div>
<div class="a" style="left:953px;top:343px;width:1px;height:21px;background:#a8e4a0"></div>
<div class="a" style="left:1017px;top:343px;width:1px;height:21px;background:#a8e4a0"></div>
<div class="a" style="left:30px;top:343px;width:1px;height:21px;background:#000"></div>
<div class="a" style="left:1083px;top:343px;width:1px;height:21px;background:#a8e4a0"></div>
<div class="cell r" style="left:31px;top:343px;width:27px;color:#eaffea;padding-right:3px"><span class="n">18</span></div>
<div class="cell r" style="left:59px;top:343px;width:60px;color:#eaffea;padding-right:3px"><span class="n">6563</span></div>
<div class="cell" style="left:120px;top:343px;width:74px;color:#eaffea;padding-left:2px"><span class="n" style="margin-right:-9.3px">380951653100</span></div>
<div class="cell" style="left:195px;top:343px;width:179px;color:#eaffea;padding-left:2px">НОРД Пласт</div>
<div class="cell" style="left:635px;top:343px;width:64px;color:#eaffea;padding-left:2px"><span class="n" style="margin-right:-3.5px">19:17</span></div>
<div class="cell" style="left:700px;top:343px;width:68px;color:#eaffea;padding-left:2px"><span class="n" style="margin-right:-3.5px">20:00</span></div>
<div class="cell" style="left:769px;top:343px;width:66px;color:#eaffea;padding-left:2px"><span class="n" style="margin-right:-3.5px">20:00</span></div>
<div class="cell" style="left:836px;top:343px;width:62px;color:#eaffea;padding-left:2px"><span class="n" style="margin-right:-3.5px">20:00</span></div>
<div class="cell r" style="left:899px;top:343px;width:54px;color:#eaffea;padding-right:3px"><span class="n">10</span></div>
<div class="cell r" style="left:954px;top:343px;width:63px;color:#eaffea;padding-right:3px"><span class="n">22</span></div>
<div class="a" style="left:19px;top:364px;width:11px;height:20px;background:#f0f0f0;border-left:1px solid #fff"></div>
<div class="a" style="left:19px;top:384px;width:12px;height:1px;background:#000"></div>
<div class="a" style="left:31px;top:364px;width:1052px;height:21px;background:#038603"></div>
<div class="a" style="left:31px;top:384px;width:1052px;height:1px;background:#a8e4a0"></div>
<div class="a" style="left:58px;top:364px;width:1px;height:21px;background:#a8e4a0"></div>
<div class="a" style="left:119px;top:364px;width:1px;height:21px;background:#a8e4a0"></div>
<div class="a" style="left:194px;top:364px;width:1px;height:21px;background:#a8e4a0"></div>
<div class="a" style="left:374px;top:364px;width:1px;height:21px;background:#a8e4a0"></div>
<div class="a" style="left:439px;top:364px;width:1px;height:21px;background:#a8e4a0"></div>
<div class="a" style="left:569px;top:364px;width:1px;height:21px;background:#a8e4a0"></div>
<div class="a" style="left:634px;top:364px;width:1px;height:21px;background:#a8e4a0"></div>
<div class="a" style="left:699px;top:364px;width:1px;height:21px;background:#a8e4a0"></div>
<div class="a" style="left:768px;top:364px;width:1px;height:21px;background:#a8e4a0"></div>
<div class="a" style="left:835px;top:364px;width:1px;height:21px;background:#a8e4a0"></div>
<div class="a" style="left:898px;top:364px;width:1px;height:21px;background:#a8e4a0"></div>
<div class="a" style="left:953px;top:364px;width:1px;height:21px;background:#a8e4a0"></div>
<div class="a" style="left:1017px;top:364px;width:1px;height:21px;background:#a8e4a0"></div>
<div class="a" style="left:30px;top:364px;width:1px;height:21px;background:#000"></div>
<div class="a" style="left:1083px;top:364px;width:1px;height:21px;background:#a8e4a0"></div>
<div class="cell r" style="left:31px;top:364px;width:27px;color:#eaffea;padding-right:3px"><span class="n">19</span></div>
<div class="cell r" style="left:59px;top:364px;width:60px;color:#eaffea;padding-right:3px"><span class="n">954</span></div>
<div class="cell" style="left:120px;top:364px;width:74px;color:#eaffea;padding-left:2px"><span class="n" style="margin-right:-9.3px">380502184477</span></div>
<div class="cell" style="left:195px;top:364px;width:179px;color:#eaffea;padding-left:2px">Мг. Элит+ <span class="n" style="margin-right:-0.8px">9</span>ка</div>
<div class="cell" style="left:635px;top:364px;width:64px;color:#eaffea;padding-left:2px"><span class="n" style="margin-right:-3.5px">19:17</span></div>
<div class="cell" style="left:700px;top:364px;width:68px;color:#eaffea;padding-left:2px"><span class="n" style="margin-right:-3.5px">19:20</span></div>
<div class="cell" style="left:769px;top:364px;width:66px;color:#eaffea;padding-left:2px"><span class="n" style="margin-right:-3.5px">19:20</span></div>
<div class="cell" style="left:836px;top:364px;width:62px;color:#eaffea;padding-left:2px"><span class="n" style="margin-right:-3.5px">19:26</span></div>
<div class="cell r" style="left:899px;top:364px;width:54px;color:#eaffea;padding-right:3px"><span class="n">10</span></div>
<div class="cell r" style="left:954px;top:364px;width:63px;color:#eaffea;padding-right:3px"><span class="n">24</span></div>
<div class="a" style="left:19px;top:385px;width:11px;height:20px;background:#f0f0f0;border-left:1px solid #fff"></div>
<div class="a" style="left:19px;top:405px;width:12px;height:1px;background:#000"></div>
<div class="a" style="left:31px;top:385px;width:1052px;height:21px;background:#038603"></div>
<div class="a" style="left:31px;top:405px;width:1052px;height:1px;background:#a8e4a0"></div>
<div class="a" style="left:58px;top:385px;width:1px;height:21px;background:#a8e4a0"></div>
<div class="a" style="left:119px;top:385px;width:1px;height:21px;background:#a8e4a0"></div>
<div class="a" style="left:194px;top:385px;width:1px;height:21px;background:#a8e4a0"></div>
<div class="a" style="left:374px;top:385px;width:1px;height:21px;background:#a8e4a0"></div>
<div class="a" style="left:439px;top:385px;width:1px;height:21px;background:#a8e4a0"></div>
<div class="a" style="left:569px;top:385px;width:1px;height:21px;background:#a8e4a0"></div>
<div class="a" style="left:634px;top:385px;width:1px;height:21px;background:#a8e4a0"></div>
<div class="a" style="left:699px;top:385px;width:1px;height:21px;background:#a8e4a0"></div>
<div class="a" style="left:768px;top:385px;width:1px;height:21px;background:#a8e4a0"></div>
<div class="a" style="left:835px;top:385px;width:1px;height:21px;background:#a8e4a0"></div>
<div class="a" style="left:898px;top:385px;width:1px;height:21px;background:#a8e4a0"></div>
<div class="a" style="left:953px;top:385px;width:1px;height:21px;background:#a8e4a0"></div>
<div class="a" style="left:1017px;top:385px;width:1px;height:21px;background:#a8e4a0"></div>
<div class="a" style="left:30px;top:385px;width:1px;height:21px;background:#000"></div>
<div class="a" style="left:1083px;top:385px;width:1px;height:21px;background:#a8e4a0"></div>
<div class="cell r" style="left:31px;top:385px;width:27px;color:#eaffea;padding-right:3px"><span class="n">20</span></div>
<div class="cell" style="left:120px;top:385px;width:74px;color:#eaffea;padding-left:2px"><span class="n" style="margin-right:-9.3px">380951792711</span></div>
<div class="cell" style="left:195px;top:385px;width:179px;color:#eaffea;padding-left:2px">Ленина</div>
<div class="cell" style="left:375px;top:385px;width:64px;color:#eaffea;padding-left:2px"><span class="n" style="margin-right:-2.3px">102</span> п<span class="n" style="margin-right:-1.2px">.1</span></div>
<div class="cell" style="left:635px;top:385px;width:64px;color:#eaffea;padding-left:2px"><span class="n" style="margin-right:-3.5px">19:43</span></div>
<div class="cell" style="left:700px;top:385px;width:68px;color:#eaffea;padding-left:2px"><span class="n" style="margin-right:-3.5px">19:44</span></div>
<div class="cell" style="left:769px;top:385px;width:66px;color:#eaffea;padding-left:2px"><span class="n" style="margin-right:-3.5px">19:44</span></div>
<div class="cell" style="left:836px;top:385px;width:62px;color:#eaffea;padding-left:2px"><span class="n" style="margin-right:-3.5px">20:01</span></div>
<div class="cell r" style="left:899px;top:385px;width:54px;color:#eaffea;padding-right:3px"><span class="n">10</span></div>
<div class="cell r" style="left:954px;top:385px;width:63px;color:#eaffea;padding-right:3px"><span class="n">7</span></div>
<div class="a" style="left:19px;top:406px;width:11px;height:20px;background:#f0f0f0;border-left:1px solid #fff"></div>
<div class="a" style="left:19px;top:426px;width:12px;height:1px;background:#000"></div>
<div class="a" style="left:31px;top:406px;width:1052px;height:21px;background:#038603"></div>
<div class="a" style="left:31px;top:426px;width:1052px;height:1px;background:#a8e4a0"></div>
<div class="a" style="left:58px;top:406px;width:1px;height:21px;background:#a8e4a0"></div>
<div class="a" style="left:119px;top:406px;width:1px;height:21px;background:#a8e4a0"></div>
<div class="a" style="left:194px;top:406px;width:1px;height:21px;background:#a8e4a0"></div>
<div class="a" style="left:374px;top:406px;width:1px;height:21px;background:#a8e4a0"></div>
<div class="a" style="left:439px;top:406px;width:1px;height:21px;background:#a8e4a0"></div>
<div class="a" style="left:569px;top:406px;width:1px;height:21px;background:#a8e4a0"></div>
<div class="a" style="left:634px;top:406px;width:1px;height:21px;background:#a8e4a0"></div>
<div class="a" style="left:699px;top:406px;width:1px;height:21px;background:#a8e4a0"></div>
<div class="a" style="left:768px;top:406px;width:1px;height:21px;background:#a8e4a0"></div>
<div class="a" style="left:835px;top:406px;width:1px;height:21px;background:#a8e4a0"></div>
<div class="a" style="left:898px;top:406px;width:1px;height:21px;background:#a8e4a0"></div>
<div class="a" style="left:953px;top:406px;width:1px;height:21px;background:#a8e4a0"></div>
<div class="a" style="left:1017px;top:406px;width:1px;height:21px;background:#a8e4a0"></div>
<div class="a" style="left:30px;top:406px;width:1px;height:21px;background:#000"></div>
<div class="a" style="left:1083px;top:406px;width:1px;height:21px;background:#a8e4a0"></div>
<div class="cell r" style="left:31px;top:406px;width:27px;color:#eaffea;padding-right:3px"><span class="n">21</span></div>
<div class="cell r" style="left:59px;top:406px;width:60px;color:#eaffea;padding-right:3px"><span class="n">5602</span></div>
<div class="cell" style="left:120px;top:406px;width:74px;color:#eaffea;padding-left:2px"><span class="n" style="margin-right:-9.3px">380953632800</span></div>
<div class="cell" style="left:195px;top:406px;width:179px;color:#eaffea;padding-left:2px">Копейка</div>
<div class="cell" style="left:635px;top:406px;width:64px;color:#eaffea;padding-left:2px"><span class="n" style="margin-right:-3.5px">19:47</span></div>
<div class="cell" style="left:700px;top:406px;width:68px;color:#eaffea;padding-left:2px"><span class="n" style="margin-right:-3.5px">19:47</span></div>
<div class="cell" style="left:769px;top:406px;width:66px;color:#eaffea;padding-left:2px"><span class="n" style="margin-right:-3.5px">19:47</span></div>
<div class="cell" style="left:836px;top:406px;width:62px;color:#eaffea;padding-left:2px"><span class="n" style="margin-right:-3.5px">20:07</span></div>
<div class="cell r" style="left:899px;top:406px;width:54px;color:#eaffea;padding-right:3px"><span class="n">10</span></div>
<div class="cell r" style="left:954px;top:406px;width:63px;color:#eaffea;padding-right:3px"><span class="n">19</span></div>
<div class="a" style="left:19px;top:427px;width:11px;height:20px;background:#f0f0f0;border-left:1px solid #fff"></div>
<div class="a" style="left:19px;top:447px;width:12px;height:1px;background:#000"></div>
<div class="a" style="left:31px;top:427px;width:1052px;height:21px;background:#038603"></div>
<div class="a" style="left:31px;top:447px;width:1052px;height:1px;background:#a8e4a0"></div>
<div class="a" style="left:58px;top:427px;width:1px;height:21px;background:#a8e4a0"></div>
<div class="a" style="left:119px;top:427px;width:1px;height:21px;background:#a8e4a0"></div>
<div class="a" style="left:194px;top:427px;width:1px;height:21px;background:#a8e4a0"></div>
<div class="a" style="left:374px;top:427px;width:1px;height:21px;background:#a8e4a0"></div>
<div class="a" style="left:439px;top:427px;width:1px;height:21px;background:#a8e4a0"></div>
<div class="a" style="left:569px;top:427px;width:1px;height:21px;background:#a8e4a0"></div>
<div class="a" style="left:634px;top:427px;width:1px;height:21px;background:#a8e4a0"></div>
<div class="a" style="left:699px;top:427px;width:1px;height:21px;background:#a8e4a0"></div>
<div class="a" style="left:768px;top:427px;width:1px;height:21px;background:#a8e4a0"></div>
<div class="a" style="left:835px;top:427px;width:1px;height:21px;background:#a8e4a0"></div>
<div class="a" style="left:898px;top:427px;width:1px;height:21px;background:#a8e4a0"></div>
<div class="a" style="left:953px;top:427px;width:1px;height:21px;background:#a8e4a0"></div>
<div class="a" style="left:1017px;top:427px;width:1px;height:21px;background:#a8e4a0"></div>
<div class="a" style="left:30px;top:427px;width:1px;height:21px;background:#000"></div>
<div class="a" style="left:1083px;top:427px;width:1px;height:21px;background:#a8e4a0"></div>
<div class="cell r" style="left:31px;top:427px;width:27px;color:#eaffea;padding-right:3px"><span class="n">22</span></div>
<div class="cell r" style="left:59px;top:427px;width:60px;color:#eaffea;padding-right:3px"><span class="n">7178</span></div>
<div class="cell" style="left:120px;top:427px;width:74px;color:#eaffea;padding-left:2px"><span class="n" style="margin-right:-9.3px">380954715011</span></div>
<div class="cell" style="left:195px;top:427px;width:179px;color:#eaffea;padding-left:2px"><span class="n" style="margin-right:-0.8px">1</span> Фабрика</div>
<div class="cell" style="left:375px;top:427px;width:64px;color:#eaffea;padding-left:2px">насосная</div>
<div class="cell" style="left:635px;top:427px;width:64px;color:#eaffea;padding-left:2px"><span class="n" style="margin-right:-3.5px">19:52</span></div>
<div class="cell" style="left:700px;top:427px;width:68px;color:#eaffea;padding-left:2px"><span class="n" style="margin-right:-3.5px">19:52</span></div>
<div class="cell" style="left:769px;top:427px;width:66px;color:#eaffea;padding-left:2px"><span class="n" style="margin-right:-3.5px">19:52</span></div>
<div class="cell" style="left:836px;top:427px;width:62px;color:#eaffea;padding-left:2px"><span class="n" style="margin-right:-3.5px">20:07</span></div>
<div class="cell r" style="left:899px;top:427px;width:54px;color:#eaffea;padding-right:3px"><span class="n">10</span></div>
<div class="cell r" style="left:954px;top:427px;width:63px;color:#eaffea;padding-right:3px"><span class="n">21</span></div>
<div class="a" style="left:19px;top:448px;width:11px;height:20px;background:#f0f0f0;border-left:1px solid #fff"></div>
<div class="a" style="left:19px;top:468px;width:12px;height:1px;background:#000"></div>
<div class="a" style="left:31px;top:448px;width:1052px;height:21px;background:#038603"></div>
<div class="a" style="left:31px;top:468px;width:1052px;height:1px;background:#a8e4a0"></div>
<div class="a" style="left:58px;top:448px;width:1px;height:21px;background:#a8e4a0"></div>
<div class="a" style="left:119px;top:448px;width:1px;height:21px;background:#a8e4a0"></div>
<div class="a" style="left:194px;top:448px;width:1px;height:21px;background:#a8e4a0"></div>
<div class="a" style="left:374px;top:448px;width:1px;height:21px;background:#a8e4a0"></div>
<div class="a" style="left:439px;top:448px;width:1px;height:21px;background:#a8e4a0"></div>
<div class="a" style="left:569px;top:448px;width:1px;height:21px;background:#a8e4a0"></div>
<div class="a" style="left:634px;top:448px;width:1px;height:21px;background:#a8e4a0"></div>
<div class="a" style="left:699px;top:448px;width:1px;height:21px;background:#a8e4a0"></div>
<div class="a" style="left:768px;top:448px;width:1px;height:21px;background:#a8e4a0"></div>
<div class="a" style="left:835px;top:448px;width:1px;height:21px;background:#a8e4a0"></div>
<div class="a" style="left:898px;top:448px;width:1px;height:21px;background:#a8e4a0"></div>
<div class="a" style="left:953px;top:448px;width:1px;height:21px;background:#a8e4a0"></div>
<div class="a" style="left:1017px;top:448px;width:1px;height:21px;background:#a8e4a0"></div>
<div class="a" style="left:30px;top:448px;width:1px;height:21px;background:#000"></div>
<div class="a" style="left:1083px;top:448px;width:1px;height:21px;background:#a8e4a0"></div>
<div class="cell r" style="left:31px;top:448px;width:27px;color:#eaffea;padding-right:3px"><span class="n">23</span></div>
<div class="cell r" style="left:59px;top:448px;width:60px;color:#eaffea;padding-right:3px"><span class="n">4981</span></div>
<div class="cell" style="left:120px;top:448px;width:74px;color:#eaffea;padding-left:2px"><span class="n" style="margin-right:-9.3px">380509627444</span></div>
<div class="cell" style="left:195px;top:448px;width:179px;color:#eaffea;padding-left:2px">Ленина/Тельмана</div>
<div class="cell" style="left:635px;top:448px;width:64px;color:#eaffea;padding-left:2px"><span class="n" style="margin-right:-3.5px">19:54</span></div>
<div class="cell" style="left:700px;top:448px;width:68px;color:#eaffea;padding-left:2px"><span class="n" style="margin-right:-3.5px">19:54</span></div>
<div class="cell" style="left:769px;top:448px;width:66px;color:#eaffea;padding-left:2px"><span class="n" style="margin-right:-3.5px">19:54</span></div>
<div class="cell" style="left:836px;top:448px;width:62px;color:#eaffea;padding-left:2px"><span class="n" style="margin-right:-3.5px">20:04</span></div>
<div class="cell r" style="left:899px;top:448px;width:54px;color:#eaffea;padding-right:3px"><span class="n">10</span></div>
<div class="cell r" style="left:954px;top:448px;width:63px;color:#eaffea;padding-right:3px"><span class="n">11</span></div>
<div class="a" style="left:19px;top:469px;width:11px;height:20px;background:#f0f0f0;border-left:1px solid #fff"></div>
<div class="a" style="left:19px;top:489px;width:12px;height:1px;background:#000"></div>
<div class="a" style="left:31px;top:469px;width:1052px;height:21px;background:#038603"></div>
<div class="a" style="left:31px;top:489px;width:1052px;height:1px;background:#a8e4a0"></div>
<div class="a" style="left:58px;top:469px;width:1px;height:21px;background:#a8e4a0"></div>
<div class="a" style="left:119px;top:469px;width:1px;height:21px;background:#a8e4a0"></div>
<div class="a" style="left:194px;top:469px;width:1px;height:21px;background:#a8e4a0"></div>
<div class="a" style="left:374px;top:469px;width:1px;height:21px;background:#a8e4a0"></div>
<div class="a" style="left:439px;top:469px;width:1px;height:21px;background:#a8e4a0"></div>
<div class="a" style="left:569px;top:469px;width:1px;height:21px;background:#a8e4a0"></div>
<div class="a" style="left:634px;top:469px;width:1px;height:21px;background:#a8e4a0"></div>
<div class="a" style="left:699px;top:469px;width:1px;height:21px;background:#a8e4a0"></div>
<div class="a" style="left:768px;top:469px;width:1px;height:21px;background:#a8e4a0"></div>
<div class="a" style="left:835px;top:469px;width:1px;height:21px;background:#a8e4a0"></div>
<div class="a" style="left:898px;top:469px;width:1px;height:21px;background:#a8e4a0"></div>
<div class="a" style="left:953px;top:469px;width:1px;height:21px;background:#a8e4a0"></div>
<div class="a" style="left:1017px;top:469px;width:1px;height:21px;background:#a8e4a0"></div>
<div class="a" style="left:30px;top:469px;width:1px;height:21px;background:#000"></div>
<div class="a" style="left:1083px;top:469px;width:1px;height:21px;background:#a8e4a0"></div>
<div class="cell r" style="left:31px;top:469px;width:27px;color:#eaffea;padding-right:3px"><span class="n">24</span></div>
<div class="cell r" style="left:59px;top:469px;width:60px;color:#eaffea;padding-right:3px"><span class="n">4734</span></div>
<div class="cell" style="left:120px;top:469px;width:74px;color:#eaffea;padding-left:2px"><span class="n" style="margin-right:-9.3px">380508362755</span></div>
<div class="cell" style="left:195px;top:469px;width:179px;color:#eaffea;padding-left:2px"><span class="n" style="margin-right:-0.8px">1</span> Фабрика</div>
<div class="cell" style="left:635px;top:469px;width:64px;color:#eaffea;padding-left:2px"><span class="n" style="margin-right:-3.5px">19:54</span></div>
<div class="cell" style="left:700px;top:469px;width:68px;color:#eaffea;padding-left:2px"><span class="n" style="margin-right:-3.5px">19:54</span></div>
<div class="cell" style="left:769px;top:469px;width:66px;color:#eaffea;padding-left:2px"><span class="n" style="margin-right:-3.5px">19:54</span></div>
<div class="cell" style="left:836px;top:469px;width:62px;color:#eaffea;padding-left:2px"><span class="n" style="margin-right:-3.5px">20:07</span></div>
<div class="cell r" style="left:899px;top:469px;width:54px;color:#eaffea;padding-right:3px"><span class="n">10</span></div>
<div class="cell r" style="left:954px;top:469px;width:63px;color:#eaffea;padding-right:3px"><span class="n">24</span></div>
<div class="a" style="left:19px;top:490px;width:11px;height:20px;background:#f0f0f0;border-left:1px solid #fff"></div>
<div class="a" style="left:19px;top:510px;width:12px;height:1px;background:#000"></div>
<div class="a" style="left:31px;top:490px;width:1052px;height:21px;background:#038603"></div>
<div class="a" style="left:31px;top:510px;width:1052px;height:1px;background:#a8e4a0"></div>
<div class="a" style="left:58px;top:490px;width:1px;height:21px;background:#a8e4a0"></div>
<div class="a" style="left:119px;top:490px;width:1px;height:21px;background:#a8e4a0"></div>
<div class="a" style="left:194px;top:490px;width:1px;height:21px;background:#a8e4a0"></div>
<div class="a" style="left:374px;top:490px;width:1px;height:21px;background:#a8e4a0"></div>
<div class="a" style="left:439px;top:490px;width:1px;height:21px;background:#a8e4a0"></div>
<div class="a" style="left:569px;top:490px;width:1px;height:21px;background:#a8e4a0"></div>
<div class="a" style="left:634px;top:490px;width:1px;height:21px;background:#a8e4a0"></div>
<div class="a" style="left:699px;top:490px;width:1px;height:21px;background:#a8e4a0"></div>
<div class="a" style="left:768px;top:490px;width:1px;height:21px;background:#a8e4a0"></div>
<div class="a" style="left:835px;top:490px;width:1px;height:21px;background:#a8e4a0"></div>
<div class="a" style="left:898px;top:490px;width:1px;height:21px;background:#a8e4a0"></div>
<div class="a" style="left:953px;top:490px;width:1px;height:21px;background:#a8e4a0"></div>
<div class="a" style="left:1017px;top:490px;width:1px;height:21px;background:#a8e4a0"></div>
<div class="a" style="left:30px;top:490px;width:1px;height:21px;background:#000"></div>
<div class="a" style="left:1083px;top:490px;width:1px;height:21px;background:#a8e4a0"></div>
<div class="cell r" style="left:31px;top:490px;width:27px;color:#eaffea;padding-right:3px"><span class="n">25</span></div>
<div class="cell r" style="left:59px;top:490px;width:60px;color:#eaffea;padding-right:3px"><span class="n">6381</span></div>
<div class="cell" style="left:120px;top:490px;width:74px;color:#eaffea;padding-left:2px"><span class="n" style="margin-right:-9.3px">380997881822</span></div>
<div class="cell" style="left:195px;top:490px;width:179px;color:#eaffea;padding-left:2px">Щёрса</div>
<div class="cell" style="left:375px;top:490px;width:64px;color:#eaffea;padding-left:2px"><span class="n" style="margin-right:-1.6px">36</span></div>
<div class="cell" style="left:635px;top:490px;width:64px;color:#eaffea;padding-left:2px"><span class="n" style="margin-right:-3.5px">19:55</span></div>
<div class="cell" style="left:700px;top:490px;width:68px;color:#eaffea;padding-left:2px"><span class="n" style="margin-right:-3.5px">19:55</span></div>
<div class="cell" style="left:769px;top:490px;width:66px;color:#eaffea;padding-left:2px"><span class="n" style="margin-right:-3.5px">19:55</span></div>
<div class="cell" style="left:836px;top:490px;width:62px;color:#eaffea;padding-left:2px"><span class="n" style="margin-right:-3.5px">20:05</span></div>
<div class="cell r" style="left:899px;top:490px;width:54px;color:#eaffea;padding-right:3px"><span class="n">10</span></div>
<div class="cell r" style="left:954px;top:490px;width:63px;color:#eaffea;padding-right:3px"><span class="n">2</span></div>
<div class="a" style="left:19px;top:511px;width:11px;height:20px;background:#f0f0f0;border-left:1px solid #fff"></div>
<div class="a" style="left:19px;top:531px;width:12px;height:1px;background:#000"></div>
<div class="a" style="left:31px;top:511px;width:1052px;height:21px;background:#038603"></div>
<div class="a" style="left:31px;top:531px;width:1052px;height:1px;background:#a8e4a0"></div>
<div class="a" style="left:58px;top:511px;width:1px;height:21px;background:#a8e4a0"></div>
<div class="a" style="left:119px;top:511px;width:1px;height:21px;background:#a8e4a0"></div>
<div class="a" style="left:194px;top:511px;width:1px;height:21px;background:#a8e4a0"></div>
<div class="a" style="left:374px;top:511px;width:1px;height:21px;background:#a8e4a0"></div>
<div class="a" style="left:439px;top:511px;width:1px;height:21px;background:#a8e4a0"></div>
<div class="a" style="left:569px;top:511px;width:1px;height:21px;background:#a8e4a0"></div>
<div class="a" style="left:634px;top:511px;width:1px;height:21px;background:#a8e4a0"></div>
<div class="a" style="left:699px;top:511px;width:1px;height:21px;background:#a8e4a0"></div>
<div class="a" style="left:768px;top:511px;width:1px;height:21px;background:#a8e4a0"></div>
<div class="a" style="left:835px;top:511px;width:1px;height:21px;background:#a8e4a0"></div>
<div class="a" style="left:898px;top:511px;width:1px;height:21px;background:#a8e4a0"></div>
<div class="a" style="left:953px;top:511px;width:1px;height:21px;background:#a8e4a0"></div>
<div class="a" style="left:1017px;top:511px;width:1px;height:21px;background:#a8e4a0"></div>
<div class="a" style="left:30px;top:511px;width:1px;height:21px;background:#000"></div>
<div class="a" style="left:1083px;top:511px;width:1px;height:21px;background:#a8e4a0"></div>
<div class="cell r" style="left:31px;top:511px;width:27px;color:#eaffea;padding-right:3px"><span class="n">26</span></div>
<div class="cell r" style="left:59px;top:511px;width:60px;color:#eaffea;padding-right:3px"><span class="n">5339</span></div>
<div class="cell" style="left:120px;top:511px;width:74px;color:#eaffea;padding-left:2px"><span class="n" style="margin-right:-9.3px">380950146011</span></div>
<div class="cell" style="left:195px;top:511px;width:179px;color:#eaffea;padding-left:2px">Лихолетого</div>
<div class="cell" style="left:375px;top:511px;width:64px;color:#eaffea;padding-left:2px"><span class="n" style="margin-right:-3.5px">24/10</span> п<span class="n" style="margin-right:-1.2px">.1</span></div>
<div class="cell" style="left:635px;top:511px;width:64px;color:#eaffea;padding-left:2px"><span class="n" style="margin-right:-3.5px">19:55</span></div>
<div class="cell" style="left:700px;top:511px;width:68px;color:#eaffea;padding-left:2px"><span class="n" style="margin-right:-3.5px">19:55</span></div>
<div class="cell" style="left:769px;top:511px;width:66px;color:#eaffea;padding-left:2px"><span class="n" style="margin-right:-3.5px">19:55</span></div>
<div class="cell" style="left:836px;top:511px;width:62px;color:#eaffea;padding-left:2px"><span class="n" style="margin-right:-3.5px">20:02</span></div>
<div class="cell r" style="left:899px;top:511px;width:54px;color:#eaffea;padding-right:3px"><span class="n">10</span></div>
<div class="cell r" style="left:954px;top:511px;width:63px;color:#eaffea;padding-right:3px"><span class="n">18</span></div>
<div class="a" style="left:19px;top:532px;width:11px;height:20px;background:#f0f0f0;border-left:1px solid #fff"></div>
<div class="a" style="left:19px;top:552px;width:12px;height:1px;background:#000"></div>
<div class="a" style="left:31px;top:532px;width:1052px;height:21px;background:#038603"></div>
<div class="a" style="left:31px;top:552px;width:1052px;height:1px;background:#a8e4a0"></div>
<div class="a" style="left:58px;top:532px;width:1px;height:21px;background:#a8e4a0"></div>
<div class="a" style="left:119px;top:532px;width:1px;height:21px;background:#a8e4a0"></div>
<div class="a" style="left:194px;top:532px;width:1px;height:21px;background:#a8e4a0"></div>
<div class="a" style="left:374px;top:532px;width:1px;height:21px;background:#a8e4a0"></div>
<div class="a" style="left:439px;top:532px;width:1px;height:21px;background:#a8e4a0"></div>
<div class="a" style="left:569px;top:532px;width:1px;height:21px;background:#a8e4a0"></div>
<div class="a" style="left:634px;top:532px;width:1px;height:21px;background:#a8e4a0"></div>
<div class="a" style="left:699px;top:532px;width:1px;height:21px;background:#a8e4a0"></div>
<div class="a" style="left:768px;top:532px;width:1px;height:21px;background:#a8e4a0"></div>
<div class="a" style="left:835px;top:532px;width:1px;height:21px;background:#a8e4a0"></div>
<div class="a" style="left:898px;top:532px;width:1px;height:21px;background:#a8e4a0"></div>
<div class="a" style="left:953px;top:532px;width:1px;height:21px;background:#a8e4a0"></div>
<div class="a" style="left:1017px;top:532px;width:1px;height:21px;background:#a8e4a0"></div>
<div class="a" style="left:30px;top:532px;width:1px;height:21px;background:#000"></div>
<div class="a" style="left:1083px;top:532px;width:1px;height:21px;background:#a8e4a0"></div>
<div class="cell r" style="left:31px;top:532px;width:27px;color:#eaffea;padding-right:3px"><span class="n">27</span></div>
<div class="cell r" style="left:59px;top:532px;width:60px;color:#eaffea;padding-right:3px"><span class="n">5327</span></div>
<div class="cell" style="left:120px;top:532px;width:74px;color:#eaffea;padding-left:2px"><span class="n" style="margin-right:-9.3px">380994914922</span></div>
<div class="cell" style="left:195px;top:532px;width:179px;color:#eaffea;padding-left:2px">МГ.№<span class="n" style="margin-right:-0.8px">8</span>(Березка)ул.Дружбы</div>
<div class="cell" style="left:635px;top:532px;width:64px;color:#eaffea;padding-left:2px"><span class="n" style="margin-right:-3.5px">19:56</span></div>
<div class="cell" style="left:700px;top:532px;width:68px;color:#eaffea;padding-left:2px"><span class="n" style="margin-right:-3.5px">19:56</span></div>
<div class="cell" style="left:769px;top:532px;width:66px;color:#eaffea;padding-left:2px"><span class="n" style="margin-right:-3.5px">19:56</span></div>
<div class="cell" style="left:836px;top:532px;width:62px;color:#eaffea;padding-left:2px"><span class="n" style="margin-right:-3.5px">20:02</span></div>
<div class="cell r" style="left:899px;top:532px;width:54px;color:#eaffea;padding-right:3px"><span class="n">10</span></div>
<div class="cell r" style="left:954px;top:532px;width:63px;color:#eaffea;padding-right:3px"><span class="n">1</span></div>
<div class="a" style="left:19px;top:553px;width:11px;height:20px;background:#f0f0f0;border-left:1px solid #fff"></div>
<div class="a" style="left:19px;top:573px;width:12px;height:1px;background:#000"></div>
<div class="a" style="left:31px;top:553px;width:1052px;height:21px;background:#038603"></div>
<div class="a" style="left:31px;top:573px;width:1052px;height:1px;background:#a8e4a0"></div>
<div class="a" style="left:58px;top:553px;width:1px;height:21px;background:#a8e4a0"></div>
<div class="a" style="left:119px;top:553px;width:1px;height:21px;background:#a8e4a0"></div>
<div class="a" style="left:194px;top:553px;width:1px;height:21px;background:#a8e4a0"></div>
<div class="a" style="left:374px;top:553px;width:1px;height:21px;background:#a8e4a0"></div>
<div class="a" style="left:439px;top:553px;width:1px;height:21px;background:#a8e4a0"></div>
<div class="a" style="left:569px;top:553px;width:1px;height:21px;background:#a8e4a0"></div>
<div class="a" style="left:634px;top:553px;width:1px;height:21px;background:#a8e4a0"></div>
<div class="a" style="left:699px;top:553px;width:1px;height:21px;background:#a8e4a0"></div>
<div class="a" style="left:768px;top:553px;width:1px;height:21px;background:#a8e4a0"></div>
<div class="a" style="left:835px;top:553px;width:1px;height:21px;background:#a8e4a0"></div>
<div class="a" style="left:898px;top:553px;width:1px;height:21px;background:#a8e4a0"></div>
<div class="a" style="left:953px;top:553px;width:1px;height:21px;background:#a8e4a0"></div>
<div class="a" style="left:1017px;top:553px;width:1px;height:21px;background:#a8e4a0"></div>
<div class="a" style="left:30px;top:553px;width:1px;height:21px;background:#000"></div>
<div class="a" style="left:1083px;top:553px;width:1px;height:21px;background:#a8e4a0"></div>
<div class="cell r" style="left:31px;top:553px;width:27px;color:#eaffea;padding-right:3px"><span class="n">28</span></div>
<div class="cell r" style="left:59px;top:553px;width:60px;color:#eaffea;padding-right:3px"><span class="n">6171</span></div>
<div class="cell" style="left:120px;top:553px;width:74px;color:#eaffea;padding-left:2px"><span class="n" style="margin-right:-9.3px">380507096400</span></div>
<div class="cell" style="left:195px;top:553px;width:179px;color:#eaffea;padding-left:2px">СВ-сити</div>
<div class="cell" style="left:375px;top:553px;width:64px;color:#eaffea;padding-left:2px">остановка</div>
<div class="cell" style="left:635px;top:553px;width:64px;color:#eaffea;padding-left:2px"><span class="n" style="margin-right:-3.5px">20:07</span></div>
<div class="cell" style="left:700px;top:553px;width:68px;color:#eaffea;padding-left:2px"><span class="n" style="margin-right:-3.5px">20:07</span></div>
<div class="cell" style="left:769px;top:553px;width:66px;color:#eaffea;padding-left:2px"><span class="n" style="margin-right:-3.5px">20:07</span></div>
<div class="cell" style="left:836px;top:553px;width:62px;color:#eaffea;padding-left:2px"><span class="n" style="margin-right:-3.5px">20:10</span></div>
<div class="cell r" style="left:899px;top:553px;width:54px;color:#eaffea;padding-right:3px"><span class="n">10</span></div>
<div class="cell r" style="left:954px;top:553px;width:63px;color:#eaffea;padding-right:3px"><span class="n">18</span></div>
<div class="a" style="left:19px;top:574px;width:11px;height:20px;background:#f0f0f0;border-left:1px solid #fff"></div>
<div class="a" style="left:19px;top:594px;width:12px;height:1px;background:#000"></div>
<div class="a" style="left:31px;top:574px;width:1052px;height:21px;background:#038603"></div>
<div class="a" style="left:31px;top:594px;width:1052px;height:1px;background:#a8e4a0"></div>
<div class="a" style="left:58px;top:574px;width:1px;height:21px;background:#a8e4a0"></div>
<div class="a" style="left:119px;top:574px;width:1px;height:21px;background:#a8e4a0"></div>
<div class="a" style="left:194px;top:574px;width:1px;height:21px;background:#a8e4a0"></div>
<div class="a" style="left:374px;top:574px;width:1px;height:21px;background:#a8e4a0"></div>
<div class="a" style="left:439px;top:574px;width:1px;height:21px;background:#a8e4a0"></div>
<div class="a" style="left:569px;top:574px;width:1px;height:21px;background:#a8e4a0"></div>
<div class="a" style="left:634px;top:574px;width:1px;height:21px;background:#a8e4a0"></div>
<div class="a" style="left:699px;top:574px;width:1px;height:21px;background:#a8e4a0"></div>
<div class="a" style="left:768px;top:574px;width:1px;height:21px;background:#a8e4a0"></div>
<div class="a" style="left:835px;top:574px;width:1px;height:21px;background:#a8e4a0"></div>
<div class="a" style="left:898px;top:574px;width:1px;height:21px;background:#a8e4a0"></div>
<div class="a" style="left:953px;top:574px;width:1px;height:21px;background:#a8e4a0"></div>
<div class="a" style="left:1017px;top:574px;width:1px;height:21px;background:#a8e4a0"></div>
<div class="a" style="left:30px;top:574px;width:1px;height:21px;background:#000"></div>
<div class="a" style="left:1083px;top:574px;width:1px;height:21px;background:#a8e4a0"></div>
<div class="cell r" style="left:31px;top:574px;width:27px;color:#eaffea;padding-right:3px"><span class="n">29</span></div>
<div class="cell r" style="left:59px;top:574px;width:60px;color:#eaffea;padding-right:3px"><span class="n">673</span></div>
<div class="cell" style="left:120px;top:574px;width:74px;color:#eaffea;padding-left:2px"><span class="n" style="margin-right:-9.3px">380501306755</span></div>
<div class="cell" style="left:195px;top:574px;width:179px;color:#eaffea;padding-left:2px">Мг. Элит+ <span class="n" style="margin-right:-0.8px">9</span>ка</div>
<div class="cell" style="left:635px;top:574px;width:64px;color:#eaffea;padding-left:2px"><span class="n" style="margin-right:-3.5px">20:24</span></div>
<div class="cell" style="left:700px;top:574px;width:68px;color:#eaffea;padding-left:2px"><span class="n" style="margin-right:-3.5px">20:24</span></div>
<div class="cell" style="left:769px;top:574px;width:66px;color:#eaffea;padding-left:2px"><span class="n" style="margin-right:-3.5px">20:24</span></div>
<div class="cell" style="left:836px;top:574px;width:62px;color:#eaffea;padding-left:2px"><span class="n" style="margin-right:-3.5px">20:30</span></div>
<div class="cell r" style="left:899px;top:574px;width:54px;color:#eaffea;padding-right:3px"><span class="n">10</span></div>
<div class="cell r" style="left:954px;top:574px;width:63px;color:#eaffea;padding-right:3px"><span class="n">12</span></div>
<div class="a" style="left:19px;top:595px;width:11px;height:20px;background:#f0f0f0;border-left:1px solid #fff"></div>
<div class="a" style="left:19px;top:615px;width:12px;height:1px;background:#000"></div>
<div class="a" style="left:31px;top:595px;width:1052px;height:21px;background:#038603"></div>
<div class="a" style="left:31px;top:615px;width:1052px;height:1px;background:#a8e4a0"></div>
<div class="a" style="left:58px;top:595px;width:1px;height:21px;background:#a8e4a0"></div>
<div class="a" style="left:119px;top:595px;width:1px;height:21px;background:#a8e4a0"></div>
<div class="a" style="left:194px;top:595px;width:1px;height:21px;background:#a8e4a0"></div>
<div class="a" style="left:374px;top:595px;width:1px;height:21px;background:#a8e4a0"></div>
<div class="a" style="left:439px;top:595px;width:1px;height:21px;background:#a8e4a0"></div>
<div class="a" style="left:569px;top:595px;width:1px;height:21px;background:#a8e4a0"></div>
<div class="a" style="left:634px;top:595px;width:1px;height:21px;background:#a8e4a0"></div>
<div class="a" style="left:699px;top:595px;width:1px;height:21px;background:#a8e4a0"></div>
<div class="a" style="left:768px;top:595px;width:1px;height:21px;background:#a8e4a0"></div>
<div class="a" style="left:835px;top:595px;width:1px;height:21px;background:#a8e4a0"></div>
<div class="a" style="left:898px;top:595px;width:1px;height:21px;background:#a8e4a0"></div>
<div class="a" style="left:953px;top:595px;width:1px;height:21px;background:#a8e4a0"></div>
<div class="a" style="left:1017px;top:595px;width:1px;height:21px;background:#a8e4a0"></div>
<div class="a" style="left:30px;top:595px;width:1px;height:21px;background:#000"></div>
<div class="a" style="left:1083px;top:595px;width:1px;height:21px;background:#a8e4a0"></div>
<div class="cell r" style="left:31px;top:595px;width:27px;color:#eaffea;padding-right:3px"><span class="n">30</span></div>
<div class="cell r" style="left:59px;top:595px;width:60px;color:#eaffea;padding-right:3px"><span class="n">3078</span></div>
<div class="cell" style="left:120px;top:595px;width:74px;color:#eaffea;padding-left:2px"><span class="n" style="margin-right:-9.3px">380504784311</span></div>
<div class="cell" style="left:195px;top:595px;width:179px;color:#eaffea;padding-left:2px">Мг. Восток</div>
<div class="cell" style="left:635px;top:595px;width:64px;color:#eaffea;padding-left:2px"><span class="n" style="margin-right:-3.5px">20:27</span></div>
<div class="cell" style="left:700px;top:595px;width:68px;color:#eaffea;padding-left:2px"><span class="n" style="margin-right:-3.5px">20:27</span></div>
<div class="cell" style="left:769px;top:595px;width:66px;color:#eaffea;padding-left:2px"><span class="n" style="margin-right:-3.5px">20:27</span></div>
<div class="cell" style="left:836px;top:595px;width:62px;color:#eaffea;padding-left:2px"><span class="n" style="margin-right:-3.5px">20:32</span></div>
<div class="cell r" style="left:899px;top:595px;width:54px;color:#eaffea;padding-right:3px"><span class="n">10</span></div>
<div class="cell r" style="left:954px;top:595px;width:63px;color:#eaffea;padding-right:3px"><span class="n">24</span></div>
<div class="a" style="left:19px;top:616px;width:11px;height:20px;background:#f0f0f0;border-left:1px solid #fff"></div>
<div class="a" style="left:19px;top:636px;width:12px;height:1px;background:#000"></div>
<div class="a" style="left:31px;top:616px;width:1052px;height:21px;background:#038603"></div>
<div class="a" style="left:31px;top:636px;width:1052px;height:1px;background:#a8e4a0"></div>
<div class="a" style="left:58px;top:616px;width:1px;height:21px;background:#a8e4a0"></div>
<div class="a" style="left:119px;top:616px;width:1px;height:21px;background:#a8e4a0"></div>
<div class="a" style="left:194px;top:616px;width:1px;height:21px;background:#a8e4a0"></div>
<div class="a" style="left:374px;top:616px;width:1px;height:21px;background:#a8e4a0"></div>
<div class="a" style="left:439px;top:616px;width:1px;height:21px;background:#a8e4a0"></div>
<div class="a" style="left:569px;top:616px;width:1px;height:21px;background:#a8e4a0"></div>
<div class="a" style="left:634px;top:616px;width:1px;height:21px;background:#a8e4a0"></div>
<div class="a" style="left:699px;top:616px;width:1px;height:21px;background:#a8e4a0"></div>
<div class="a" style="left:768px;top:616px;width:1px;height:21px;background:#a8e4a0"></div>
<div class="a" style="left:835px;top:616px;width:1px;height:21px;background:#a8e4a0"></div>
<div class="a" style="left:898px;top:616px;width:1px;height:21px;background:#a8e4a0"></div>
<div class="a" style="left:953px;top:616px;width:1px;height:21px;background:#a8e4a0"></div>
<div class="a" style="left:1017px;top:616px;width:1px;height:21px;background:#a8e4a0"></div>
<div class="a" style="left:30px;top:616px;width:1px;height:21px;background:#000"></div>
<div class="a" style="left:1083px;top:616px;width:1px;height:21px;background:#a8e4a0"></div>
<div class="cell r" style="left:31px;top:616px;width:27px;color:#eaffea;padding-right:3px"><span class="n">31</span></div>
<div class="cell r" style="left:59px;top:616px;width:60px;color:#eaffea;padding-right:3px"><span class="n">5745</span></div>
<div class="cell" style="left:120px;top:616px;width:74px;color:#eaffea;padding-left:2px"><span class="n" style="margin-right:-9.3px">380997029455</span></div>
<div class="cell" style="left:195px;top:616px;width:179px;color:#eaffea;padding-left:2px">АТП Думбасар</div>
<div class="cell" style="left:635px;top:616px;width:64px;color:#eaffea;padding-left:2px"><span class="n" style="margin-right:-3.5px">20:29</span></div>
<div class="cell" style="left:700px;top:616px;width:68px;color:#eaffea;padding-left:2px"><span class="n" style="margin-right:-3.5px">20:29</span></div>
<div class="cell" style="left:769px;top:616px;width:66px;color:#eaffea;padding-left:2px"><span class="n" style="margin-right:-3.5px">20:29</span></div>
<div class="cell" style="left:836px;top:616px;width:62px;color:#eaffea;padding-left:2px"><span class="n" style="margin-right:-3.5px">20:37</span></div>
<div class="cell r" style="left:899px;top:616px;width:54px;color:#eaffea;padding-right:3px"><span class="n">10</span></div>
<div class="cell r" style="left:954px;top:616px;width:63px;color:#eaffea;padding-right:3px"><span class="n">22</span></div>
<div class="a" style="left:19px;top:637px;width:11px;height:20px;background:#f0f0f0;border-left:1px solid #fff"></div>
<div class="a" style="left:19px;top:657px;width:12px;height:1px;background:#000"></div>
<div class="a" style="left:31px;top:637px;width:1052px;height:21px;background:#ffff00"></div>
<div class="a" style="left:31px;top:657px;width:1052px;height:1px;background:#e2d880"></div>
<div class="a" style="left:58px;top:637px;width:1px;height:21px;background:#e2d880"></div>
<div class="a" style="left:119px;top:637px;width:1px;height:21px;background:#e2d880"></div>
<div class="a" style="left:194px;top:637px;width:1px;height:21px;background:#e2d880"></div>
<div class="a" style="left:374px;top:637px;width:1px;height:21px;background:#e2d880"></div>
<div class="a" style="left:439px;top:637px;width:1px;height:21px;background:#e2d880"></div>
<div class="a" style="left:569px;top:637px;width:1px;height:21px;background:#e2d880"></div>
<div class="a" style="left:634px;top:637px;width:1px;height:21px;background:#e2d880"></div>
<div class="a" style="left:699px;top:637px;width:1px;height:21px;background:#e2d880"></div>
<div class="a" style="left:768px;top:637px;width:1px;height:21px;background:#e2d880"></div>
<div class="a" style="left:835px;top:637px;width:1px;height:21px;background:#e2d880"></div>
<div class="a" style="left:898px;top:637px;width:1px;height:21px;background:#e2d880"></div>
<div class="a" style="left:953px;top:637px;width:1px;height:21px;background:#e2d880"></div>
<div class="a" style="left:1017px;top:637px;width:1px;height:21px;background:#e2d880"></div>
<div class="a" style="left:30px;top:637px;width:1px;height:21px;background:#000"></div>
<div class="a" style="left:1083px;top:637px;width:1px;height:21px;background:#e2d880"></div>
<div class="cell r" style="left:31px;top:637px;width:27px;color:#000;padding-right:3px"><span class="n">32</span></div>
<div class="cell r" style="left:59px;top:637px;width:60px;color:#000;padding-right:3px"><span class="n">5029</span></div>
<div class="cell" style="left:120px;top:637px;width:74px;color:#000;padding-left:2px"><span class="n" style="margin-right:-9.3px">380994383822</span></div>
<div class="cell" style="left:195px;top:637px;width:179px;color:#000;padding-left:2px">ДЮЦ</div>
<div class="cell" style="left:635px;top:637px;width:64px;color:#000;padding-left:2px"><span class="n" style="margin-right:-3.5px">20:52</span></div>
<div class="cell" style="left:700px;top:637px;width:68px;color:#000;padding-left:2px"><span class="n" style="margin-right:-3.5px">20:52</span></div>
<div class="cell" style="left:769px;top:637px;width:66px;color:#000;padding-left:2px"><span class="n" style="margin-right:-3.5px">20:52</span></div>
<div class="cell r" style="left:899px;top:637px;width:54px;color:#000;padding-right:3px"><span class="n">0</span></div>
<div class="cell r" style="left:954px;top:637px;width:63px;color:#000;padding-right:3px"><span class="n">2</span></div>
<div class="a" style="left:19px;top:658px;width:11px;height:20px;background:#f0f0f0;border-left:1px solid #fff"></div>
<div class="a" style="left:19px;top:678px;width:12px;height:1px;background:#000"></div>
<div class="a" style="left:31px;top:658px;width:1052px;height:21px;background:#ffff00"></div>
<div class="a" style="left:31px;top:678px;width:1052px;height:1px;background:#e2d880"></div>
<div class="a" style="left:58px;top:658px;width:1px;height:21px;background:#e2d880"></div>
<div class="a" style="left:119px;top:658px;width:1px;height:21px;background:#e2d880"></div>
<div class="a" style="left:194px;top:658px;width:1px;height:21px;background:#e2d880"></div>
<div class="a" style="left:374px;top:658px;width:1px;height:21px;background:#e2d880"></div>
<div class="a" style="left:439px;top:658px;width:1px;height:21px;background:#e2d880"></div>
<div class="a" style="left:569px;top:658px;width:1px;height:21px;background:#e2d880"></div>
<div class="a" style="left:634px;top:658px;width:1px;height:21px;background:#e2d880"></div>
<div class="a" style="left:699px;top:658px;width:1px;height:21px;background:#e2d880"></div>
<div class="a" style="left:768px;top:658px;width:1px;height:21px;background:#e2d880"></div>
<div class="a" style="left:835px;top:658px;width:1px;height:21px;background:#e2d880"></div>
<div class="a" style="left:898px;top:658px;width:1px;height:21px;background:#e2d880"></div>
<div class="a" style="left:953px;top:658px;width:1px;height:21px;background:#e2d880"></div>
<div class="a" style="left:1017px;top:658px;width:1px;height:21px;background:#e2d880"></div>
<div class="a" style="left:30px;top:658px;width:1px;height:21px;background:#000"></div>
<div class="a" style="left:1083px;top:658px;width:1px;height:21px;background:#e2d880"></div>
<div class="cell r" style="left:31px;top:658px;width:27px;color:#000;padding-right:3px"><span class="n">33</span></div>
<div class="cell r" style="left:59px;top:658px;width:60px;color:#000;padding-right:3px"><span class="n">4664</span></div>
<div class="cell" style="left:120px;top:658px;width:74px;color:#000;padding-left:2px"><span class="n" style="margin-right:-9.3px">380660512622</span></div>
<div class="cell" style="left:195px;top:658px;width:179px;color:#000;padding-left:2px">Мг. Визит</div>
<div class="cell" style="left:635px;top:658px;width:64px;color:#000;padding-left:2px"><span class="n" style="margin-right:-3.5px">20:54</span></div>
<div class="cell" style="left:700px;top:658px;width:68px;color:#000;padding-left:2px"><span class="n" style="margin-right:-3.5px">20:55</span></div>
<div class="cell" style="left:769px;top:658px;width:66px;color:#000;padding-left:2px"><span class="n" style="margin-right:-3.5px">20:55</span></div>
<div class="cell r" style="left:899px;top:658px;width:54px;color:#000;padding-right:3px"><span class="n">0</span></div>
<div class="cell r" style="left:954px;top:658px;width:63px;color:#000;padding-right:3px"><span class="n">10</span></div>
<div class="a" style="left:19px;top:679px;width:11px;height:20px;background:#f0f0f0;border-left:1px solid #fff"></div>
<div class="a" style="left:19px;top:699px;width:12px;height:1px;background:#000"></div>
<div class="a" style="left:31px;top:679px;width:1052px;height:21px;background:#ffff00"></div>
<div class="a" style="left:31px;top:699px;width:1052px;height:1px;background:#e2d880"></div>
<div class="a" style="left:58px;top:679px;width:1px;height:21px;background:#e2d880"></div>
<div class="a" style="left:119px;top:679px;width:1px;height:21px;background:#e2d880"></div>
<div class="a" style="left:194px;top:679px;width:1px;height:21px;background:#e2d880"></div>
<div class="a" style="left:374px;top:679px;width:1px;height:21px;background:#e2d880"></div>
<div class="a" style="left:439px;top:679px;width:1px;height:21px;background:#e2d880"></div>
<div class="a" style="left:569px;top:679px;width:1px;height:21px;background:#e2d880"></div>
<div class="a" style="left:634px;top:679px;width:1px;height:21px;background:#e2d880"></div>
<div class="a" style="left:699px;top:679px;width:1px;height:21px;background:#e2d880"></div>
<div class="a" style="left:768px;top:679px;width:1px;height:21px;background:#e2d880"></div>
<div class="a" style="left:835px;top:679px;width:1px;height:21px;background:#e2d880"></div>
<div class="a" style="left:898px;top:679px;width:1px;height:21px;background:#e2d880"></div>
<div class="a" style="left:953px;top:679px;width:1px;height:21px;background:#e2d880"></div>
<div class="a" style="left:1017px;top:679px;width:1px;height:21px;background:#e2d880"></div>
<div class="a" style="left:30px;top:679px;width:1px;height:21px;background:#000"></div>
<div class="a" style="left:1083px;top:679px;width:1px;height:21px;background:#e2d880"></div>
<div class="a" style="left:31px;top:679px;width:27px;height:20px;background:#3399ff;outline:1px dotted #000;outline-offset:-1px"></div>
<div class="cell r" style="left:31px;top:679px;width:27px;color:#e8f4ff;padding-right:3px"><span class="n">34</span></div>
<div class="cell" style="left:120px;top:679px;width:74px;color:#000;padding-left:2px"><span class="n" style="margin-right:-4.8px">3-61-09</span></div>
<div class="cell" style="left:195px;top:679px;width:179px;color:#000;padding-left:2px">Тельмана</div>
<div class="cell" style="left:375px;top:679px;width:64px;color:#000;padding-left:2px"><span class="n" style="margin-right:-1.6px">37</span></div>
<div class="cell" style="left:635px;top:679px;width:64px;color:#000;padding-left:2px"><span class="n" style="margin-right:-3.5px">20:57</span></div>
<div class="cell" style="left:700px;top:679px;width:68px;color:#000;padding-left:2px"><span class="n" style="margin-right:-3.5px">20:58</span></div>
<div class="cell" style="left:769px;top:679px;width:66px;color:#000;padding-left:2px"><span class="n" style="margin-right:-3.5px">20:58</span></div>
<div class="cell r" style="left:899px;top:679px;width:54px;color:#000;padding-right:3px"><span class="n">0</span></div>
<div class="cell r" style="left:954px;top:679px;width:63px;color:#000;padding-right:3px"><span class="n">11</span></div>
<svg class="a" style="left:20px;top:683px" width="9" height="12"><path d="M1 0 L8 6 L1 12 Z" fill="#000"/></svg>
<div class="a" style="left:1084px;top:133px;width:17px;height:582px;background:#f0f0f0;border-left:1px solid #e6e6e6"></div>
<svg class="a" style="left:1089px;top:139px" width="8" height="5"><path d="M0 4 L4 0 L8 4 Z" fill="#303030"/></svg>
<svg class="a" style="left:1089px;top:705px" width="8" height="5"><path d="M0 0 L4 4 L8 0 Z" fill="#303030"/></svg>
<div class="a" style="left:1085px;top:458px;width:15px;height:239px;border:1px solid #9a9a9a;border-radius:2px;background:linear-gradient(90deg,#e8e8e8,#f4f4f4 40%,#d8d8d8)"></div>
<div class="a" style="left:1089px;top:573px;width:7px;height:1px;background:#555;box-shadow:0 2px 0 #555,0 4px 0 #555"></div>
<div class="sp" style="left:0px;width:98px">Смена: 2</div>
<div class="sp" style="left:102px;width:246px"><span style="letter-spacing:0">Диспетчер:&nbsp;&nbsp;Портненко Л.И</span></div>
<div class="sp" style="left:352px;width:197px">Число: 15.11.2010</div>
<div class="sp" style="left:552px;width:116px">Всего вызовов: 34</div>
<div class="sp" style="left:672px;width:46px"></div>
<div class="sp" style="left:722px;width:147px"></div>
<div class="sp" style="left:872px;width:258px"></div>
<div class="a" style="left:17px;top:767px;width:25px;height:12px;border-radius:50%;background:radial-gradient(#b8d0e0,#6a8aa8);border:1px solid #5a7088"></div>
</body></html>
